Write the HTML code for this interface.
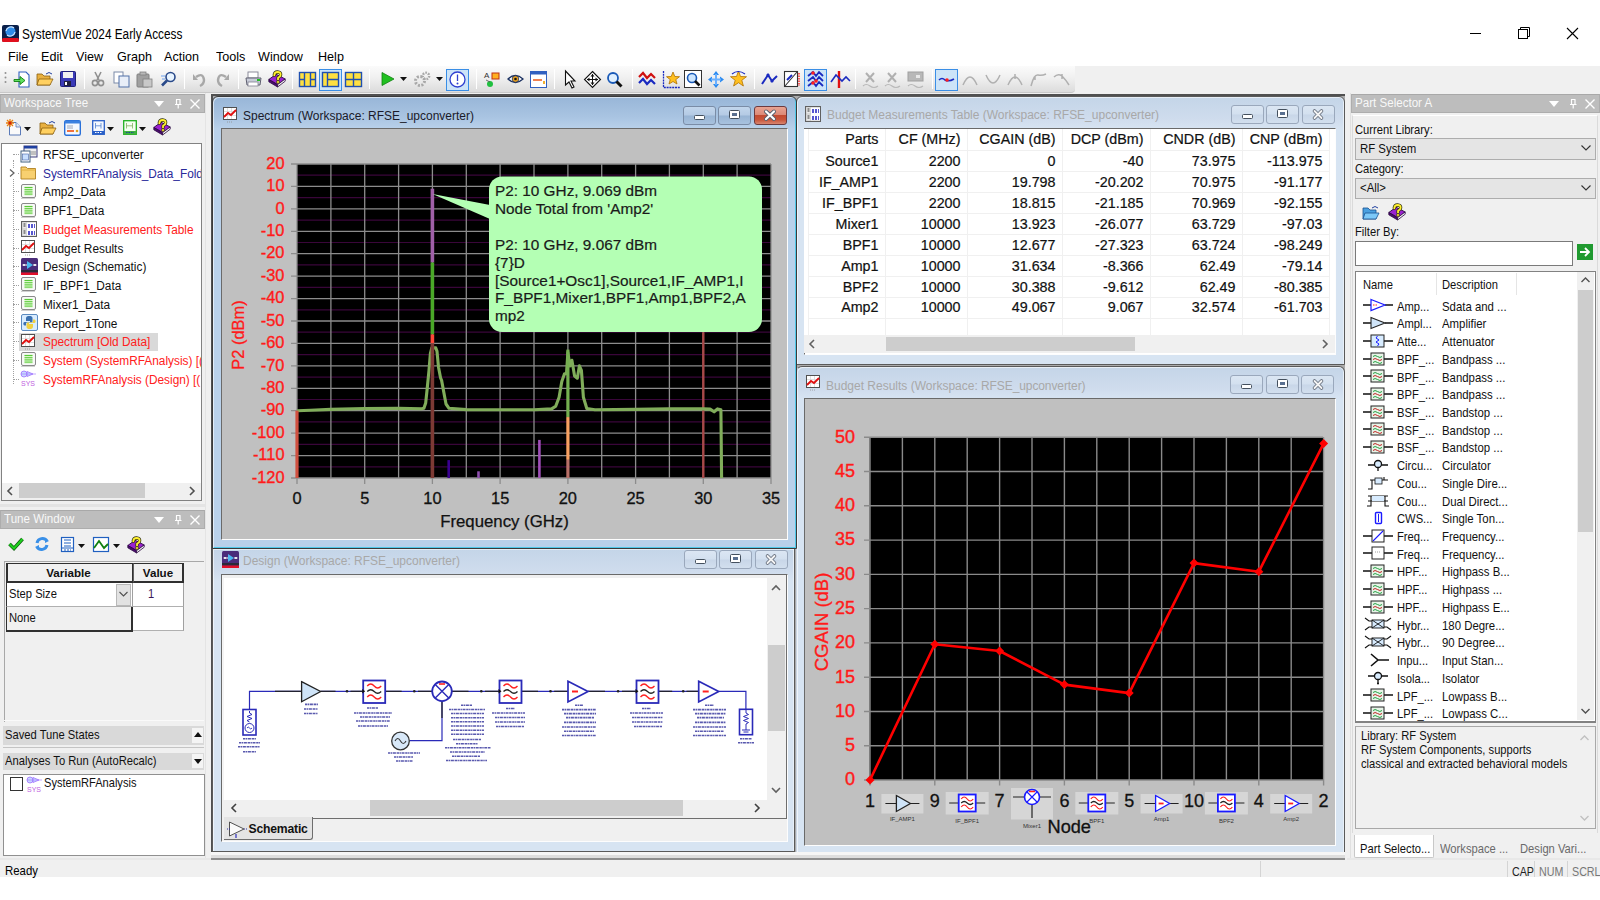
<!DOCTYPE html><html><head><meta charset="utf-8"><title>SystemVue</title><style>
html,body{margin:0;padding:0;width:1600px;height:900px;overflow:hidden;background:#fff;font-family:"Liberation Sans", sans-serif;position:relative;}
div{box-sizing:border-box;}
svg{position:absolute;overflow:visible;}
</style></head><body>
<svg style="left:2px;top:25px" width="17" height="17" viewBox="0 0 17 17"><rect x="0" y="0" width="17" height="17" rx="2" fill="#0a1f4a"/><rect x="0" y="13" width="17" height="4" rx="1.5" fill="#e0101e"/><circle cx="8.5" cy="6.5" r="5" fill="#2f8ce8"/><path d="M4 6 A5 5 0 0 1 12 3" stroke="#cfe6ff" stroke-width="1.2" fill="none"/><path d="M13 7 A5 5 0 0 1 5 10" stroke="#cfe6ff" stroke-width="1.2" fill="none"/></svg>
<div style="position:absolute;left:22px;top:23.59px;font-size:13.97px;line-height:20.95px;color:#000;white-space:nowrap;transform:scaleX(0.845);transform-origin:0 0;">SystemVue 2024 Early Access</div>
<svg style="left:1460px;top:20px" width="130" height="26" viewBox="0 0 130 26"><line x1="10" y1="13.5" x2="21" y2="13.5" stroke="#000" stroke-width="1"/><rect x="58.5" y="9.5" width="9" height="9" fill="none" stroke="#000" stroke-width="1"/><path d="M60.5 9.5 V7.5 H69.5 V16.5 H67.5" fill="none" stroke="#000" stroke-width="1"/><path d="M107 8 L118 19 M118 8 L107 19" stroke="#000" stroke-width="1.1"/></svg>
<div style="position:absolute;left:7.5px;top:47.52px;font-size:12.29px;line-height:18.44px;color:#000;white-space:nowrap;transform:scaleX(1.025);transform-origin:0 0;">File</div>
<div style="position:absolute;left:40.5px;top:47.52px;font-size:12.29px;line-height:18.44px;color:#000;white-space:nowrap;transform:scaleX(1.025);transform-origin:0 0;">Edit</div>
<div style="position:absolute;left:76px;top:47.52px;font-size:12.29px;line-height:18.44px;color:#000;white-space:nowrap;transform:scaleX(1.025);transform-origin:0 0;">View</div>
<div style="position:absolute;left:117px;top:47.52px;font-size:12.29px;line-height:18.44px;color:#000;white-space:nowrap;transform:scaleX(1.025);transform-origin:0 0;">Graph</div>
<div style="position:absolute;left:164px;top:47.52px;font-size:12.29px;line-height:18.44px;color:#000;white-space:nowrap;transform:scaleX(1.025);transform-origin:0 0;">Action</div>
<div style="position:absolute;left:216px;top:47.52px;font-size:12.29px;line-height:18.44px;color:#000;white-space:nowrap;transform:scaleX(1.025);transform-origin:0 0;">Tools</div>
<div style="position:absolute;left:258px;top:47.52px;font-size:12.29px;line-height:18.44px;color:#000;white-space:nowrap;transform:scaleX(1.025);transform-origin:0 0;">Window</div>
<div style="position:absolute;left:318px;top:47.52px;font-size:12.29px;line-height:18.44px;color:#000;white-space:nowrap;transform:scaleX(1.025);transform-origin:0 0;">Help</div>
<div style="position:absolute;left:0px;top:66px;width:1600px;height:28px;background:#f0f0f0;"></div>
<div style="position:absolute;left:0px;top:66px;width:1075px;height:27px;background:linear-gradient(#fbfbfb,#f0f0f0 45%,#dcdcdc);border-radius:0 0 4px 0;border-bottom:1px solid #c8c8c8;"></div>
<svg style="left:4px;top:71px" width="4" height="16" viewBox="0 0 4 16"><circle cx="1.5" cy="2" r="1" fill="#909090"/><circle cx="1.5" cy="6.5" r="1" fill="#909090"/><circle cx="1.5" cy="11" r="1" fill="#909090"/></svg><svg style="left:13px;top:71px" width="17" height="17" viewBox="0 0 17 17"><path d="M6 1 H13 L16 4 V16 H6 Z" fill="#fff" stroke="#3060c0" stroke-width="1.1"/><path d="M1 8.5 H7 V5.5 L12 9.5 L7 13.5 V10.5 H1 Z" fill="#60e060" stroke="#108010" stroke-width="0.9"/></svg><svg style="left:36px;top:71px" width="18" height="16" viewBox="0 0 18 16"><path d="M1 3 H6 L8 5 H14 V14 H1 Z" fill="#e8b040" stroke="#8a6010" stroke-width="0.8"/><path d="M3 8 H17 L14 14 H1 Z" fill="#ffd060" stroke="#8a6010" stroke-width="0.8"/><path d="M10 3 Q13 0 16 3" fill="none" stroke="#2040a0" stroke-width="1"/></svg><svg style="left:60px;top:71px" width="16" height="16" viewBox="0 0 16 16"><rect x="0.5" y="0.5" width="15" height="15" rx="1" fill="#3a3ab8" stroke="#20207a" stroke-width="1"/><rect x="3" y="1" width="10" height="6" fill="#f0f0f0"/><rect x="4" y="10" width="7" height="5" fill="#202040"/><rect x="5" y="11" width="2" height="3" fill="#fff"/></svg><div style="position:absolute;left:84px;top:69px;width:1px;height:20px;background:#c8c8c8;border-right:1px solid #fff;"></div><svg style="left:91px;top:71px" width="14" height="16" viewBox="0 0 14 16"><path d="M4 1 L8 9 M10 1 L6 9" stroke="#909090" stroke-width="1.6"/><circle cx="4" cy="12" r="2.6" fill="none" stroke="#909090" stroke-width="1.6"/><circle cx="10" cy="12" r="2.6" fill="none" stroke="#909090" stroke-width="1.6"/></svg><svg style="left:113px;top:71px" width="17" height="17" viewBox="0 0 17 17"><rect x="1" y="1" width="9" height="11" fill="#fff" stroke="#7a8aa8" stroke-width="1"/><rect x="6" y="5" width="10" height="11" fill="#e8eef8" stroke="#5070a8" stroke-width="1"/></svg><svg style="left:136px;top:71px" width="17" height="17" viewBox="0 0 17 17"><rect x="1" y="3" width="12" height="13" rx="1" fill="#a0a0a0" stroke="#808080" stroke-width="1"/><rect x="4" y="1" width="6" height="3" fill="#b8b8b8" stroke="#808080" stroke-width="0.8"/><rect x="7" y="8" width="9" height="8" fill="#c8c8c8" stroke="#808080" stroke-width="0.8"/></svg><svg style="left:160px;top:71px" width="17" height="17" viewBox="0 0 17 17"><circle cx="10.5" cy="6" r="4.5" fill="#e8f4ff" stroke="#2a4a8a" stroke-width="1.6"/><path d="M7 9.5 L2 14.5" stroke="#2a4a8a" stroke-width="2.6"/><path d="M1 5 H5 M2 8 H5" stroke="#6aa0f0" stroke-width="1"/></svg><div style="position:absolute;left:184px;top:69px;width:1px;height:20px;background:#c8c8c8;border-right:1px solid #fff;"></div><svg style="left:192px;top:71px" width="15" height="16" viewBox="0 0 15 16"><path d="M4 6 Q11 1 12 9 Q12 13 8 15" fill="none" stroke="#a8a8a8" stroke-width="2.4"/><path d="M1 3 L6 9 L1 9 Z" fill="#a8a8a8"/></svg><svg style="left:215px;top:71px" width="15" height="16" viewBox="0 0 15 16"><path d="M11 6 Q4 1 3 9 Q3 13 7 15" fill="none" stroke="#a8a8a8" stroke-width="2.4"/><path d="M14 3 L9 9 L14 9 Z" fill="#a8a8a8"/></svg><div style="position:absolute;left:238px;top:69px;width:1px;height:20px;background:#c8c8c8;border-right:1px solid #fff;"></div><svg style="left:245px;top:71px" width="17" height="17" viewBox="0 0 17 17"><rect x="3" y="1" width="10" height="6" fill="#fff" stroke="#808090" stroke-width="0.9"/><path d="M1 7 H16 L15 14 H2 Z" fill="#c8ccd8" stroke="#606070" stroke-width="1"/><rect x="3" y="11" width="10" height="4" fill="#fff" stroke="#808090" stroke-width="0.8"/><rect x="12" y="8" width="3" height="2" fill="#20c020"/></svg><svg style="left:268px;top:71px" width="18" height="17" viewBox="0 0 18 17"><g transform="scale(1.0)"><path d="M0.8 8.5 L8 3.2 L17.2 8 L9.6 13.6 Z" fill="#9a22d0" stroke="#2a0840" stroke-width="0.9"/><path d="M0.8 8.5 L0.8 10.8 L9.6 16 L9.6 13.6 Z" fill="#4a0a70" stroke="#2a0840" stroke-width="0.8"/><path d="M9.6 13.6 L17.2 8 L17.2 10.2 L9.6 16 Z" fill="#f4f4f4" stroke="#2a0840" stroke-width="0.8"/><path d="M6.3 4.2 Q6.5 1 9.6 1 Q12.8 1.2 12.6 3.8 Q12.4 5.6 10.2 6.6 L10 8.4" fill="none" stroke="#303010" stroke-width="3.4" stroke-linecap="round"/><path d="M6.3 4.2 Q6.5 1 9.6 1 Q12.8 1.2 12.6 3.8 Q12.4 5.6 10.2 6.6 L10 8.4" fill="none" stroke="#fff030" stroke-width="1.9" stroke-linecap="round"/><circle cx="10" cy="11" r="1.5" fill="#fff030" stroke="#303010" stroke-width="0.7"/></g></svg><div style="position:absolute;left:292px;top:69px;width:1px;height:20px;background:#c8c8c8;border-right:1px solid #fff;"></div><svg style="left:299px;top:71px" width="17" height="17" viewBox="0 0 17 17"><rect x="0.5" y="1.5" width="16" height="14" fill="#ffe040" stroke="#2050b0" stroke-width="1.4"/><path d="M5.5 1.5 V15.5 M11.5 1.5 V15.5 M0.5 8.5 H5.5 M11.5 8.5 H16.5" stroke="#2050b0" stroke-width="1.4"/></svg><div style="position:absolute;left:319px;top:68.5px;width:23px;height:22px;background:#cce4f8;border:1.5px solid #3a8ee6;"></div><svg style="left:322px;top:71px" width="17" height="17" viewBox="0 0 17 17"><rect x="0.5" y="1.5" width="16" height="14" fill="#ffe040" stroke="#2050b0" stroke-width="1.4"/><path d="M5.5 1.5 V15.5 M5.5 8.5 H16.5" stroke="#2050b0" stroke-width="1.4"/></svg><svg style="left:345px;top:71px" width="17" height="17" viewBox="0 0 17 17"><rect x="0.5" y="1.5" width="16" height="14" fill="#ffe040" stroke="#2050b0" stroke-width="1.4"/><path d="M8.5 1.5 V15.5 M0.5 8.5 H16.5" stroke="#2050b0" stroke-width="1.4"/></svg><div style="position:absolute;left:369px;top:69px;width:1px;height:20px;background:#c8c8c8;border-right:1px solid #fff;"></div><svg style="left:380px;top:71px" width="15" height="16" viewBox="0 0 15 16"><path d="M2 1.5 L14 8 L2 14.5 Z" fill="#20c020" stroke="#108010" stroke-width="0.8"/></svg><svg style="left:400px;top:77px" width="8" height="5" viewBox="0 0 8 5"><path d="M0 0 H7 L3.5 4 Z" fill="#111"/></svg><svg style="left:413px;top:71px" width="18" height="17" viewBox="0 0 18 17"><circle cx="7" cy="10" r="4.5" fill="none" stroke="#a8a8a8" stroke-width="3" stroke-dasharray="2 1.5"/><circle cx="13" cy="5" r="3.2" fill="none" stroke="#a8a8a8" stroke-width="2.4" stroke-dasharray="1.6 1.2"/></svg><svg style="left:436px;top:77px" width="8" height="5" viewBox="0 0 8 5"><path d="M0 0 H7 L3.5 4 Z" fill="#111"/></svg><div style="position:absolute;left:446px;top:68.5px;width:23px;height:22px;background:#cce4f8;border:1.5px solid #3a8ee6;"></div><svg style="left:448px;top:70px" width="19" height="19" viewBox="0 0 19 19"><circle cx="9.5" cy="9.5" r="7.5" fill="#fff" stroke="#3040d0" stroke-width="1.3"/><path d="M9.5 4.5 V11" stroke="#3040d0" stroke-width="1.3"/><circle cx="9.5" cy="13.5" r="1" fill="#3040d0"/></svg><div style="position:absolute;left:476px;top:69px;width:1px;height:20px;background:#c8c8c8;border-right:1px solid #fff;"></div><svg style="left:483px;top:70px" width="19" height="19" viewBox="0 0 19 19"><text x="1" y="8" font-size="8" font-family="Liberation Sans" fill="#333">A</text><rect x="9" y="3" width="7" height="6" fill="#ffb020" stroke="#c03010" stroke-width="1"/><circle cx="7" cy="14" r="3" fill="#20c040"/><path d="M3 10 L7 12" stroke="#505050" stroke-width="0.8"/></svg><svg style="left:507px;top:72px" width="17" height="14" viewBox="0 0 17 14"><path d="M1 7 Q8.5 0 16 7 Q8.5 14 1 7 Z" fill="#fff" stroke="#1a3060" stroke-width="1.3"/><circle cx="8.5" cy="7" r="3.3" fill="#e8a020" stroke="#1a3060" stroke-width="0.8"/><circle cx="8.5" cy="7" r="1.3" fill="#111"/></svg><svg style="left:530px;top:71px" width="17" height="17" viewBox="0 0 17 17"><rect x="0.5" y="0.5" width="16" height="16" fill="#fff" stroke="#3060c0" stroke-width="1"/><rect x="0.5" y="0.5" width="16" height="3" fill="#3060c0"/><rect x="3" y="8" width="9" height="2" fill="#f08050"/><rect x="13" y="10" width="2" height="3" fill="#f0b030"/></svg><div style="position:absolute;left:554px;top:69px;width:1px;height:20px;background:#c8c8c8;border-right:1px solid #fff;"></div><svg style="left:564px;top:70px" width="12" height="19" viewBox="0 0 12 19"><path d="M1.5 1 V15 L5 12 L8 18 L10 17 L7 11 L11 11 Z" fill="#fff" stroke="#111" stroke-width="1.1"/></svg><svg style="left:584px;top:71px" width="17" height="17" viewBox="0 0 17 17"><path d="M8.5 0.5 L16.5 8.5 L8.5 16.5 L0.5 8.5 Z" fill="#fff" stroke="#111" stroke-width="1.1"/><path d="M8.5 3 V14 M3 8.5 H14" stroke="#111" stroke-width="1"/><path d="M8.5 3 L6.5 5.5 H10.5 Z M8.5 14 L6.5 11.5 H10.5 Z M3 8.5 L5.5 6.5 V10.5 Z M14 8.5 L11.5 6.5 V10.5 Z" fill="#111"/></svg><svg style="left:606px;top:71px" width="17" height="17" viewBox="0 0 17 17"><circle cx="7" cy="7" r="5" fill="#e0f0ff" stroke="#1a5ab8" stroke-width="1.8"/><path d="M10.5 10.5 L15.5 15.5" stroke="#111" stroke-width="3"/></svg><div style="position:absolute;left:632px;top:69px;width:1px;height:20px;background:#c8c8c8;border-right:1px solid #fff;"></div><svg style="left:638px;top:71px" width="18" height="17" viewBox="0 0 18 17"><path d="M1 6 L5 2 L9 7 L13 3 L17 7" fill="none" stroke="#d01010" stroke-width="2.2"/><path d="M1 12 L5 8 L9 13 L13 9 L17 13" fill="none" stroke="#1a2ac0" stroke-width="2.2"/></svg><svg style="left:662px;top:70px" width="19" height="19" viewBox="0 0 19 19"><path d="M1.5 1 V17.5 H18" stroke="#1a2ac0" stroke-width="1.3" fill="none" stroke-dasharray="2 0.8"/><path d="M11 2 L12.8 6.5 L17.5 6.7 L13.8 9.6 L15 14 L11 11.5 L7 14 L8.2 9.6 L4.5 6.7 L9.2 6.5 Z" fill="#ffc020" stroke="#b07000" stroke-width="0.8"/></svg><svg style="left:684px;top:70px" width="18" height="19" viewBox="0 0 18 19"><rect x="0.5" y="0.5" width="17" height="17" fill="#fff" stroke="#333" stroke-width="1"/><circle cx="8" cy="8" r="4.5" fill="#cde6ff" stroke="#1a5ab8" stroke-width="1.6"/><path d="M11 11 L15.5 15.5" stroke="#111" stroke-width="2.6"/></svg><svg style="left:707px;top:70px" width="18" height="19" viewBox="0 0 18 19"><path d="M9 1 L12 5 H6 Z M9 18 L12 14 H6 Z M1 9.5 L5 6.5 V12.5 Z M17 9.5 L13 6.5 V12.5 Z" fill="#2a8af0"/><path d="M9 4 V15 M4 9.5 H14" stroke="#6ab0ff" stroke-width="2"/></svg><svg style="left:729px;top:70px" width="19" height="19" viewBox="0 0 19 19"><path d="M9.5 1 L11.5 6.5 L17.5 6.7 L12.8 10.3 L14.4 16 L9.5 12.7 L4.6 16 L6.2 10.3 L1.5 6.7 L7.5 6.5 Z" fill="#ffc020" stroke="#b07000" stroke-width="0.8"/><path d="M3 4 Q9 -1 16 4" fill="none" stroke="#1a2ac0" stroke-width="1.2"/></svg><div style="position:absolute;left:754px;top:69px;width:1px;height:20px;background:#c8c8c8;border-right:1px solid #fff;"></div><svg style="left:761px;top:71px" width="17" height="16" viewBox="0 0 17 16"><path d="M1 13 L7 4 L11 10 L16 5" fill="none" stroke="#1a2ac0" stroke-width="2"/><circle cx="7" cy="4" r="1.6" fill="#1a2ac0"/><circle cx="11" cy="10" r="1.6" fill="#1a2ac0"/></svg><svg style="left:784px;top:71px" width="17" height="17" viewBox="0 0 17 17"><rect x="0.5" y="0.5" width="13" height="15" fill="#fff" stroke="#333" stroke-width="1.1"/><path d="M1 15 L13 1" stroke="#333" stroke-width="1.1"/><path d="M3 9 L8 4" stroke="#1a2ac0" stroke-width="2"/><path d="M15 2 V15" stroke="#ff2020" stroke-width="1.4" stroke-dasharray="1.5 1"/></svg><div style="position:absolute;left:804px;top:68.5px;width:23px;height:22px;background:#cce4f8;border:1.5px solid #3a8ee6;"></div><svg style="left:806px;top:70px" width="19" height="19" viewBox="0 0 19 19"><path d="M2 6 L7 2 L10 6 L13 2 L17 6" fill="none" stroke="#1a2ac0" stroke-width="1.8"/><path d="M2 11 L7 7 L10 11 L13 7 L17 11" fill="none" stroke="#1a2ac0" stroke-width="1.8"/><path d="M2 16 L7 12 L10 16 L13 12 L17 16" fill="none" stroke="#1a2ac0" stroke-width="1.8"/><circle cx="7" cy="3" r="1.8" fill="#ff2020"/><circle cx="10" cy="11" r="1.8" fill="#ff2020"/><circle cx="7" cy="13" r="1.8" fill="#ff2020"/></svg><svg style="left:830px;top:70px" width="22" height="19" viewBox="0 0 22 19"><path d="M9 1 V18" stroke="#e01010" stroke-width="2.4"/><path d="M1 12 L6 5 L12 11 L16 7 L20 11" fill="none" stroke="#1a2ac0" stroke-width="1.6"/></svg><div style="position:absolute;left:855px;top:69px;width:1px;height:20px;background:#c8c8c8;border-right:1px solid #fff;"></div><svg style="left:862px;top:71px" width="17" height="17" viewBox="0 0 17 17"><path d="M4 2 L12 11 M12 2 L4 11" stroke="#b0b0b0" stroke-width="2"/><path d="M1 15 Q4 12 8 15 T16 15" fill="none" stroke="#b8b8b8" stroke-width="1.2"/></svg><svg style="left:884px;top:71px" width="17" height="17" viewBox="0 0 17 17"><path d="M4 2 L12 11 M12 2 L4 11" stroke="#b0b0b0" stroke-width="2"/><path d="M1 15 Q4 12 8 15 T16 15" fill="none" stroke="#b8b8b8" stroke-width="1.2"/></svg><svg style="left:907px;top:71px" width="17" height="17" viewBox="0 0 17 17"><rect x="1" y="1" width="15" height="9" fill="#b8b8b8" stroke="#a0a0a0" stroke-width="1"/><rect x="9" y="4" width="4" height="3" fill="#e8e8e8"/><path d="M1 15 Q4 12 8 15 T16 15" fill="none" stroke="#b8b8b8" stroke-width="1.2"/></svg><div style="position:absolute;left:932px;top:69px;width:1px;height:20px;background:#c8c8c8;border-right:1px solid #fff;"></div><div style="position:absolute;left:935px;top:68.5px;width:23px;height:22px;background:#cce4f8;border:1.5px solid #3a8ee6;"></div><svg style="left:937px;top:70px" width="19" height="19" viewBox="0 0 19 19"><path d="M2 10 Q5 7 8 10 Q12 12 17 9" fill="none" stroke="#1a2ac0" stroke-width="1.6"/><circle cx="10" cy="10" r="1.8" fill="#ff2020"/></svg><svg style="left:962px;top:71px" width="17" height="17" viewBox="0 0 17 17"><path d="M1 14 Q8 -2 15 14" fill="none" stroke="#b0b0b0" stroke-width="1.5"/></svg><svg style="left:985px;top:71px" width="17" height="17" viewBox="0 0 17 17"><path d="M1 4 Q8 20 15 4" fill="none" stroke="#b0b0b0" stroke-width="1.5"/></svg><svg style="left:1007px;top:71px" width="17" height="17" viewBox="0 0 17 17"><path d="M1 14 Q8 -2 15 14 M8 3 V8" fill="none" stroke="#b0b0b0" stroke-width="1.5"/></svg><svg style="left:1030px;top:71px" width="17" height="17" viewBox="0 0 17 17"><path d="M1 15 Q4 3 8 4 Q12 5 16 3 M5 6 V9" fill="none" stroke="#b0b0b0" stroke-width="1.5"/></svg><svg style="left:1053px;top:71px" width="17" height="17" viewBox="0 0 17 17"><path d="M1 6 Q5 2 9 5 Q13 9 16 14 M9 3 V8" fill="none" stroke="#b0b0b0" stroke-width="1.5"/></svg>
<div style="position:absolute;left:0px;top:93px;width:211px;height:767px;background:#f0f0f0;"></div>
<div style="position:absolute;left:205px;top:93px;width:6px;height:767px;background:#f0f0f0;border-left:1px solid #e4e4e4;"></div><div style="position:absolute;left:0px;top:93.5px;width:205px;height:19px;background:#bdbdbd;border:1px solid #adadad;border-top-color:#a8a8a8;"></div><div style="position:absolute;left:4px;top:94.98px;font-size:11.87px;line-height:17.81px;color:#f8f8f8;white-space:nowrap;transform:scaleX(0.977);transform-origin:0 0;">Workspace Tree</div><svg style="left:153px;top:99.5px" width="12" height="8" viewBox="0 0 12 8"><path d="M1 1 H11 L6 7 Z" fill="#fff"/></svg><svg style="left:172px;top:97.5px" width="12" height="12" viewBox="0 0 12 12"><path d="M4 1.5 H8.5 M4.5 1.5 V6.5 M8 1.5 V6.5 M3 6.5 H9.5 M6.2 6.5 V10.5" stroke="#fff" stroke-width="1.2" fill="none"/></svg><svg style="left:189px;top:97.5px" width="12" height="12" viewBox="0 0 12 12"><path d="M1.5 1.5 L10.5 10.5 M10.5 1.5 L1.5 10.5" stroke="#fff" stroke-width="1.4"/></svg><svg style="left:6px;top:119px" width="16" height="17" viewBox="0 0 16 17"><path d="M3.5 3.5 H10 L14.5 8 V16 H3.5 Z" fill="#fafafa" stroke="#5a7ab8" stroke-width="1"/><path d="M10 3.5 V8 H14.5" fill="#e0e8f4" stroke="#5a7ab8" stroke-width="0.8"/><path d="M1 1 L7 7 M7 1 L1 7 M4 0 V8 M0 4 H8" stroke="#e88010" stroke-width="1.3"/><circle cx="4" cy="4" r="1.5" fill="#d02010"/></svg><svg style="left:24px;top:127px" width="8" height="5" viewBox="0 0 8 5"><path d="M0 0 H7 L3.5 4 Z" fill="#111"/></svg><svg style="left:39px;top:120px" width="18" height="16" viewBox="0 0 18 16"><path d="M1 3 H6 L8 5 H14 V14 H1 Z" fill="#e8b040" stroke="#8a6010" stroke-width="0.8"/><path d="M3 8 H17 L14 14 H1 Z" fill="#ffd060" stroke="#8a6010" stroke-width="0.8"/><path d="M10 3 Q13 0 16 3" fill="none" stroke="#2040a0" stroke-width="1"/></svg><svg style="left:64px;top:120px" width="17" height="16" viewBox="0 0 17 16"><rect x="0.7" y="0.7" width="15.6" height="14.6" rx="1.5" fill="#f4f8ff" stroke="#2a70d8" stroke-width="1.4"/><rect x="0.7" y="0.7" width="15.6" height="2.8" fill="#3a80e0"/><path d="M3 6 H9 M3 8 H9" stroke="#a0a8b8" stroke-width="1"/><rect x="3" y="10" width="7" height="2" fill="#f07040"/><circle cx="13" cy="11" r="1.3" fill="#e0a020"/></svg><svg style="left:92px;top:120px" width="13" height="15" viewBox="0 0 13 15"><rect x="0.7" y="0.7" width="11.6" height="13.6" fill="#f4f8ff" stroke="#2a60c8" stroke-width="1.3"/><path d="M3.5 3 V8.5 M9 3 V8.5 M3.5 5.8 H9" stroke="#5080d0" stroke-width="0.8"/><rect x="0.7" y="11" width="11.6" height="3.3" fill="#2a60c8"/><path d="M3 12.5 H10" stroke="#fff" stroke-width="1" stroke-dasharray="1.5 1"/></svg><svg style="left:107px;top:127px" width="8" height="5" viewBox="0 0 8 5"><path d="M0 0 H7 L3.5 4 Z" fill="#111"/></svg><svg style="left:123px;top:120px" width="14" height="15" viewBox="0 0 14 15"><rect x="0.7" y="0.7" width="12.6" height="13.6" fill="#f4fff0" stroke="#20b020" stroke-width="1.3"/><path d="M3.5 3 V8.5 M9.5 3 V8.5 M3.5 5.8 H9.5" stroke="#80b060" stroke-width="0.8"/><rect x="0.7" y="11" width="12.6" height="3.3" fill="#40b040"/><path d="M3 12.5 H11" stroke="#1a4a9a" stroke-width="1" stroke-dasharray="1.5 1"/></svg><svg style="left:139px;top:127px" width="8" height="5" viewBox="0 0 8 5"><path d="M0 0 H7 L3.5 4 Z" fill="#111"/></svg><svg style="left:153px;top:119px" width="18" height="17" viewBox="0 0 18 17"><g transform="scale(1.0)"><path d="M0.8 8.5 L8 3.2 L17.2 8 L9.6 13.6 Z" fill="#9a22d0" stroke="#2a0840" stroke-width="0.9"/><path d="M0.8 8.5 L0.8 10.8 L9.6 16 L9.6 13.6 Z" fill="#4a0a70" stroke="#2a0840" stroke-width="0.8"/><path d="M9.6 13.6 L17.2 8 L17.2 10.2 L9.6 16 Z" fill="#f4f4f4" stroke="#2a0840" stroke-width="0.8"/><path d="M6.3 4.2 Q6.5 1 9.6 1 Q12.8 1.2 12.6 3.8 Q12.4 5.6 10.2 6.6 L10 8.4" fill="none" stroke="#303010" stroke-width="3.4" stroke-linecap="round"/><path d="M6.3 4.2 Q6.5 1 9.6 1 Q12.8 1.2 12.6 3.8 Q12.4 5.6 10.2 6.6 L10 8.4" fill="none" stroke="#fff030" stroke-width="1.9" stroke-linecap="round"/><circle cx="10" cy="11" r="1.5" fill="#fff030" stroke="#303010" stroke-width="0.7"/></g></svg><div style="position:absolute;left:1px;top:143px;width:201px;height:358px;background:#fff;border:1px solid #828282;"></div><svg style="left:0px;top:0px" width="30" height="400" viewBox="0 0 30 400"></svg><div style="position:absolute;left:12.5px;top:160px;width:1px;height:224px;border-left:1px dotted #a0a0a0;"></div><div style="position:absolute;left:13px;top:153.8px;width:6px;height:1px;border-top:1px dotted #a0a0a0;"></div><svg style="left:20px;top:145.3px" width="18" height="18" viewBox="0 0 18 18"><rect x="4" y="1" width="13" height="11" fill="#f0f0f0" stroke="#404080" stroke-width="1"/><rect x="4" y="1" width="13" height="2.5" fill="#2040a0"/><rect x="1" y="6" width="9" height="11" fill="#fff" stroke="#406080" stroke-width="1"/><rect x="2.5" y="9" width="6" height="6" fill="#c8e0ff" stroke="#4060a0" stroke-width="0.6"/><rect x="11" y="6" width="5" height="4" fill="#c0c0c0"/></svg><div style="position:absolute;left:42.5px;top:145.93px;font-size:12.01px;line-height:18.02px;color:#111;white-space:nowrap;transform:scaleX(0.987);transform-origin:0 0;width:160.1px;overflow:hidden;">RFSE_upconverter</div><div style="position:absolute;left:13px;top:172.54000000000002px;width:6px;height:1px;border-top:1px dotted #a0a0a0;"></div><svg style="left:20px;top:165.04000000000002px" width="17" height="15" viewBox="0 0 17 15"><path d="M1 2 H6 L7.5 3.5 H15.5 V14 H1 Z" fill="#f8d070" stroke="#b08020" stroke-width="0.9"/><path d="M1 5 H15.5" stroke="#e0b040" stroke-width="1"/></svg><div style="position:absolute;left:42.5px;top:164.67px;font-size:12.01px;line-height:18.02px;color:#2a2a9a;white-space:nowrap;transform:scaleX(0.987);transform-origin:0 0;width:160.1px;overflow:hidden;">SystemRFAnalysis_Data_Fold</div><div style="position:absolute;left:13px;top:191.28px;width:6px;height:1px;border-top:1px dotted #a0a0a0;"></div><svg style="left:20px;top:182.78px" width="17" height="17" viewBox="0 0 17 17"><rect x="1.5" y="1.5" width="14" height="13" rx="1.5" fill="#f8f8f8" stroke="#8a8a8a" stroke-width="1"/><rect x="4.5" y="3.5" width="8" height="9" fill="#d8f8c8"/><path d="M4.5 4.5 H12.5 M4.5 6.7 H12.5 M4.5 8.9 H12.5 M4.5 11.1 H12.5" stroke="#58c838" stroke-width="1"/><path d="M1.5 15.5 H15.5" stroke="#a0a0a0" stroke-width="1" stroke-dasharray="1 1"/></svg><div style="position:absolute;left:42.5px;top:183.41px;font-size:12.01px;line-height:18.02px;color:#111;white-space:nowrap;transform:scaleX(0.987);transform-origin:0 0;width:160.1px;overflow:hidden;">Amp2_Data</div><div style="position:absolute;left:13px;top:210.02px;width:6px;height:1px;border-top:1px dotted #a0a0a0;"></div><svg style="left:20px;top:201.52px" width="17" height="17" viewBox="0 0 17 17"><rect x="1.5" y="1.5" width="14" height="13" rx="1.5" fill="#f8f8f8" stroke="#8a8a8a" stroke-width="1"/><rect x="4.5" y="3.5" width="8" height="9" fill="#d8f8c8"/><path d="M4.5 4.5 H12.5 M4.5 6.7 H12.5 M4.5 8.9 H12.5 M4.5 11.1 H12.5" stroke="#58c838" stroke-width="1"/><path d="M1.5 15.5 H15.5" stroke="#a0a0a0" stroke-width="1" stroke-dasharray="1 1"/></svg><div style="position:absolute;left:42.5px;top:202.15px;font-size:12.01px;line-height:18.02px;color:#111;white-space:nowrap;transform:scaleX(0.987);transform-origin:0 0;width:160.1px;overflow:hidden;">BPF1_Data</div><div style="position:absolute;left:13px;top:228.76px;width:6px;height:1px;border-top:1px dotted #a0a0a0;"></div><svg style="left:20.5px;top:220.76px" width="16" height="16" viewBox="0 0 16 16"><rect x="0.5" y="0.5" width="15" height="15" fill="#c8c8c8" stroke="#606060"/><rect x="6" y="1.5" width="9" height="13" fill="#fff"/><rect x="1.5" y="1.5" width="4" height="6" fill="#e8e8e8"/><rect x="1.5" y="8.5" width="4" height="6" fill="#e8e8e8"/><path d="M7 4 H14 M7 6 H14 M7 11 H14 M7 13 H14" stroke="#2020c0" stroke-width="1.3" stroke-dasharray="2 1"/><path d="M2.5 3 H4.5 M2.5 5 H4.5 M2.5 10 H4.5 M2.5 12 H4.5" stroke="#303030" stroke-width="1"/></svg><div style="position:absolute;left:42.5px;top:220.89px;font-size:12.01px;line-height:18.02px;color:#ff2020;white-space:nowrap;transform:scaleX(0.987);transform-origin:0 0;width:160.1px;overflow:hidden;">Budget Measurements Table</div><div style="position:absolute;left:13px;top:247.5px;width:6px;height:1px;border-top:1px dotted #a0a0a0;"></div><svg style="left:20px;top:239.0px" width="17" height="17" viewBox="0 0 17 17"><rect x="1.5" y="1.5" width="13" height="12" fill="#fff" stroke="#505050" stroke-width="1"/><path d="M5.5 2 V13 M9.5 2 V13 M2 5.5 H14 M2 9.5 H14" stroke="#d8d8d8" stroke-width="0.8"/><path d="M2 11 L6 7 L9 9 L14 4" stroke="#e01010" stroke-width="1.8" fill="none"/><path d="M5 16 H11" stroke="#909090" stroke-width="0.8" stroke-dasharray="1 1"/></svg><div style="position:absolute;left:42.5px;top:239.63px;font-size:12.01px;line-height:18.02px;color:#111;white-space:nowrap;transform:scaleX(0.987);transform-origin:0 0;width:160.1px;overflow:hidden;">Budget Results</div><div style="position:absolute;left:13px;top:266.24px;width:6px;height:1px;border-top:1px dotted #a0a0a0;"></div><svg style="left:20.5px;top:257.74px" width="17" height="17" viewBox="0 0 17 17"><rect x="0" y="0" width="17" height="17" rx="1.5" fill="#4a2c7a"/><rect x="0" y="12" width="17" height="2.5" fill="#2a2a3a"/><rect x="0" y="14.5" width="17" height="2.5" fill="#e0102a"/><path d="M6 3 L12 7 L6 11 Z" fill="#4ab8f0"/><path d="M1.5 7 H6 M12 7 H15.5" stroke="#fff" stroke-width="1.2"/><circle cx="3" cy="7" r="1" fill="#fff"/><circle cx="14" cy="7" r="1" fill="#fff"/></svg><div style="position:absolute;left:42.5px;top:258.37px;font-size:12.01px;line-height:18.02px;color:#111;white-space:nowrap;transform:scaleX(0.987);transform-origin:0 0;width:160.1px;overflow:hidden;">Design (Schematic)</div><div style="position:absolute;left:13px;top:284.98px;width:6px;height:1px;border-top:1px dotted #a0a0a0;"></div><svg style="left:20px;top:276.48px" width="17" height="17" viewBox="0 0 17 17"><rect x="1.5" y="1.5" width="14" height="13" rx="1.5" fill="#f8f8f8" stroke="#8a8a8a" stroke-width="1"/><rect x="4.5" y="3.5" width="8" height="9" fill="#d8f8c8"/><path d="M4.5 4.5 H12.5 M4.5 6.7 H12.5 M4.5 8.9 H12.5 M4.5 11.1 H12.5" stroke="#58c838" stroke-width="1"/><path d="M1.5 15.5 H15.5" stroke="#a0a0a0" stroke-width="1" stroke-dasharray="1 1"/></svg><div style="position:absolute;left:42.5px;top:277.11px;font-size:12.01px;line-height:18.02px;color:#111;white-space:nowrap;transform:scaleX(0.987);transform-origin:0 0;width:160.1px;overflow:hidden;">IF_BPF1_Data</div><div style="position:absolute;left:13px;top:303.72px;width:6px;height:1px;border-top:1px dotted #a0a0a0;"></div><svg style="left:20px;top:295.22px" width="17" height="17" viewBox="0 0 17 17"><rect x="1.5" y="1.5" width="14" height="13" rx="1.5" fill="#f8f8f8" stroke="#8a8a8a" stroke-width="1"/><rect x="4.5" y="3.5" width="8" height="9" fill="#d8f8c8"/><path d="M4.5 4.5 H12.5 M4.5 6.7 H12.5 M4.5 8.9 H12.5 M4.5 11.1 H12.5" stroke="#58c838" stroke-width="1"/><path d="M1.5 15.5 H15.5" stroke="#a0a0a0" stroke-width="1" stroke-dasharray="1 1"/></svg><div style="position:absolute;left:42.5px;top:295.85px;font-size:12.01px;line-height:18.02px;color:#111;white-space:nowrap;transform:scaleX(0.987);transform-origin:0 0;width:160.1px;overflow:hidden;">Mixer1_Data</div><div style="position:absolute;left:13px;top:322.46000000000004px;width:6px;height:1px;border-top:1px dotted #a0a0a0;"></div><svg style="left:20.5px;top:313.96000000000004px" width="17" height="17" viewBox="0 0 17 17"><rect x="0.5" y="0.5" width="16" height="16" rx="1.5" fill="#d8ecff" stroke="#5a8ac0" stroke-width="1"/><path d="M8.5 2 C5 2 5 3.5 5 5 V7 H9 V8 H3.5 C2 8 2 11 3.5 11.5 H5 V9.5 C5 8.8 5.6 8.5 6.2 8.5 H10 C11 8.5 11.5 8 11.5 7 V4 C11.5 2.5 10 2 8.5 2 Z" fill="#3a70b0"/><path d="M8.5 15 C12 15 12 13.5 12 12 V10 H8 V9 H13.5 C15 9 15 6 13.5 5.5 H12 V7.5 C12 8.2 11.4 8.5 10.8 8.5 H7 C6 8.5 5.5 9 5.5 10 V13 C5.5 14.5 7 15 8.5 15 Z" fill="#f0d040"/></svg><div style="position:absolute;left:42.5px;top:314.59px;font-size:12.01px;line-height:18.02px;color:#111;white-space:nowrap;transform:scaleX(0.987);transform-origin:0 0;width:160.1px;overflow:hidden;">Report_1Tone</div><div style="position:absolute;left:13px;top:341.2px;width:6px;height:1px;border-top:1px dotted #a0a0a0;"></div><div style="position:absolute;left:19px;top:332.9px;width:139px;height:18.2px;background:#d9d9d9;"></div><svg style="left:20px;top:332.7px" width="17" height="17" viewBox="0 0 17 17"><rect x="1.5" y="1.5" width="13" height="12" fill="#fff" stroke="#505050" stroke-width="1"/><path d="M5.5 2 V13 M9.5 2 V13 M2 5.5 H14 M2 9.5 H14" stroke="#d8d8d8" stroke-width="0.8"/><path d="M2 11 L6 7 L9 9 L14 4" stroke="#e01010" stroke-width="1.8" fill="none"/><path d="M5 16 H11" stroke="#909090" stroke-width="0.8" stroke-dasharray="1 1"/></svg><div style="position:absolute;left:42.5px;top:333.33px;font-size:12.01px;line-height:18.02px;color:#ff2020;white-space:nowrap;transform:scaleX(0.987);transform-origin:0 0;width:160.1px;overflow:hidden;">Spectrum [Old Data]</div><div style="position:absolute;left:13px;top:359.94px;width:6px;height:1px;border-top:1px dotted #a0a0a0;"></div><svg style="left:20px;top:351.44px" width="17" height="17" viewBox="0 0 17 17"><rect x="1.5" y="1.5" width="14" height="13" rx="1.5" fill="#f8f8f8" stroke="#8a8a8a" stroke-width="1"/><rect x="4.5" y="3.5" width="8" height="9" fill="#d8f8c8"/><path d="M4.5 4.5 H12.5 M4.5 6.7 H12.5 M4.5 8.9 H12.5 M4.5 11.1 H12.5" stroke="#58c838" stroke-width="1"/><path d="M1.5 15.5 H15.5" stroke="#a0a0a0" stroke-width="1" stroke-dasharray="1 1"/></svg><div style="position:absolute;left:42.5px;top:352.07px;font-size:12.01px;line-height:18.02px;color:#ff2020;white-space:nowrap;transform:scaleX(0.987);transform-origin:0 0;width:160.1px;overflow:hidden;">System (SystemRFAnalysis) [(</div><div style="position:absolute;left:13px;top:378.68px;width:6px;height:1px;border-top:1px dotted #a0a0a0;"></div><svg style="left:20px;top:370.18px" width="17" height="17" viewBox="0 0 17 17"><circle cx="4" cy="4" r="3" fill="#c8d8ff" stroke="#a070ff" stroke-width="0.8"/><path d="M7 1.5 L13 4 L7 6.5 Z" fill="#c8e0ff" stroke="#a070ff" stroke-width="0.8"/><path d="M1 4 H16" stroke="#a070ff" stroke-width="0.6"/><text x="1" y="16" font-size="7" font-family="Liberation Sans" fill="#c060e0">SYS</text></svg><div style="position:absolute;left:42.5px;top:370.81px;font-size:12.01px;line-height:18.02px;color:#ff2020;white-space:nowrap;transform:scaleX(0.987);transform-origin:0 0;width:160.1px;overflow:hidden;">SystemRFAnalysis (Design) [(</div><div style="position:absolute;left:7px;top:168px;width:10px;height:10px;background:#fff;"></div><svg style="left:8px;top:168px" width="8" height="10" viewBox="0 0 8 10"><path d="M2 1.5 L6 5 L2 8.5" fill="none" stroke="#606060" stroke-width="1.2"/></svg><div style="position:absolute;left:2px;top:482.5px;width:199px;height:17px;background:#f0f0f0;"></div><div style="position:absolute;left:19px;top:483px;width:126px;height:15px;background:#cdcdcd;"></div><svg style="left:5px;top:485px" width="10" height="12" viewBox="0 0 10 12"><path d="M7 2 L3 6 L7 10" fill="none" stroke="#505050" stroke-width="1.6"/></svg><svg style="left:187px;top:485px" width="10" height="12" viewBox="0 0 10 12"><path d="M3 2 L7 6 L3 10" fill="none" stroke="#505050" stroke-width="1.6"/></svg><div style="position:absolute;left:0px;top:504px;width:205px;height:3px;background:#e4e4e4;"></div><div style="position:absolute;left:0px;top:510px;width:205px;height:19px;background:#bdbdbd;border:1px solid #adadad;border-top-color:#a8a8a8;"></div><div style="position:absolute;left:4px;top:511.48px;font-size:11.87px;line-height:17.81px;color:#f8f8f8;white-space:nowrap;transform:scaleX(0.977);transform-origin:0 0;">Tune Window</div><svg style="left:153px;top:516px" width="12" height="8" viewBox="0 0 12 8"><path d="M1 1 H11 L6 7 Z" fill="#fff"/></svg><svg style="left:172px;top:514px" width="12" height="12" viewBox="0 0 12 12"><path d="M4 1.5 H8.5 M4.5 1.5 V6.5 M8 1.5 V6.5 M3 6.5 H9.5 M6.2 6.5 V10.5" stroke="#fff" stroke-width="1.2" fill="none"/></svg><svg style="left:189px;top:514px" width="12" height="12" viewBox="0 0 12 12"><path d="M1.5 1.5 L10.5 10.5 M10.5 1.5 L1.5 10.5" stroke="#fff" stroke-width="1.4"/></svg><svg style="left:8px;top:537px" width="16" height="14" viewBox="0 0 16 14"><path d="M1.5 7 L6 11.5 L14.5 2" fill="none" stroke="#0a5a0a" stroke-width="3.6"/><path d="M1.5 7 L6 11.5 L14.5 2" fill="none" stroke="#20d020" stroke-width="2.2"/></svg><svg style="left:34px;top:536px" width="16" height="16" viewBox="0 0 16 16"><path d="M3 7 A5.5 5.5 0 0 1 13 5" fill="none" stroke="#3a90e8" stroke-width="3"/><path d="M13 9 A5.5 5.5 0 0 1 3 11" fill="none" stroke="#3a90e8" stroke-width="3"/><path d="M11 2 L15 5 L11 7 Z M5 9 L1 11 L5 14 Z" fill="#3a90e8"/></svg><svg style="left:61px;top:537px" width="13" height="15" viewBox="0 0 13 15"><rect x="0.5" y="0.5" width="12" height="14" fill="#fff" stroke="#2060c0" stroke-width="1.2"/><path d="M3 3 H10 M3 6 H10 M3 9 H10 M0.5 11 H12.5" stroke="#2060c0" stroke-width="1"/><path d="M3 13 H10" stroke="#2060c0" stroke-width="1" stroke-dasharray="2 1"/></svg><svg style="left:78px;top:544px" width="8" height="5" viewBox="0 0 8 5"><path d="M0 0 H7 L3.5 4 Z" fill="#111"/></svg><svg style="left:93px;top:537px" width="16" height="15" viewBox="0 0 16 15"><rect x="0.5" y="0.5" width="15" height="14" fill="#fff" stroke="#2060c0" stroke-width="1.2"/><path d="M1 11 L6 4 L11 11 L15 7" fill="none" stroke="#108010" stroke-width="1.8"/></svg><svg style="left:113px;top:544px" width="8" height="5" viewBox="0 0 8 5"><path d="M0 0 H7 L3.5 4 Z" fill="#111"/></svg><svg style="left:127px;top:537px" width="18" height="17" viewBox="0 0 18 17"><g transform="scale(1.0)"><path d="M0.8 8.5 L8 3.2 L17.2 8 L9.6 13.6 Z" fill="#9a22d0" stroke="#2a0840" stroke-width="0.9"/><path d="M0.8 8.5 L0.8 10.8 L9.6 16 L9.6 13.6 Z" fill="#4a0a70" stroke="#2a0840" stroke-width="0.8"/><path d="M9.6 13.6 L17.2 8 L17.2 10.2 L9.6 16 Z" fill="#f4f4f4" stroke="#2a0840" stroke-width="0.8"/><path d="M6.3 4.2 Q6.5 1 9.6 1 Q12.8 1.2 12.6 3.8 Q12.4 5.6 10.2 6.6 L10 8.4" fill="none" stroke="#303010" stroke-width="3.4" stroke-linecap="round"/><path d="M6.3 4.2 Q6.5 1 9.6 1 Q12.8 1.2 12.6 3.8 Q12.4 5.6 10.2 6.6 L10 8.4" fill="none" stroke="#fff030" stroke-width="1.9" stroke-linecap="round"/><circle cx="10" cy="11" r="1.5" fill="#fff030" stroke="#303010" stroke-width="0.7"/></g></svg><div style="position:absolute;left:3.5px;top:561px;width:200px;height:161px;border-top:1.5px solid #a8a8a8;border-left:1.5px solid #a8a8a8;"></div><div style="position:absolute;left:5.5px;top:563px;width:128px;height:20px;background:#f0f0f0;border:2px solid #303030;border-top:1.5px solid #303030;"></div><div style="position:absolute;left:132.5px;top:563px;width:51px;height:20px;background:#f0f0f0;border:2px solid #303030;border-left:1px solid #606060;border-top:1.5px solid #303030;"></div><div style="position:absolute;left:-131.5px;width:400px;top:566.7px;font-size:11.6px;line-height:11.6px;color:#111;white-space:nowrap;text-align:center;font-weight:bold;">Variable</div><div style="position:absolute;left:-42px;width:400px;top:566.7px;font-size:11.6px;line-height:11.6px;color:#111;white-space:nowrap;text-align:center;font-weight:bold;">Value</div><div style="position:absolute;left:5.5px;top:583px;width:127px;height:24px;background:#fff;border-right:1px solid #a0a0a0;border-bottom:1px solid #b0b0b0;border-left:1.5px solid #303030;"></div><div style="position:absolute;left:116px;top:584px;width:15px;height:22px;background:#e2e2e2;border:1px solid #b8b8b8;"></div><svg style="left:117px;top:590px" width="13" height="8" viewBox="0 0 13 8"><path d="M2.5 2 L6.5 6 L10.5 2" fill="none" stroke="#505050" stroke-width="1.1"/></svg><div style="position:absolute;left:132.5px;top:583px;width:51px;height:24px;background:#fff;border-right:1px solid #a0a0a0;border-bottom:1px solid #b0b0b0;"></div><div style="position:absolute;left:8.5px;top:584.97px;font-size:12.43px;line-height:18.65px;color:#111;white-space:nowrap;transform:scaleX(0.901);transform-origin:0 0;">Step Size</div><div style="position:absolute;left:148px;top:584.97px;font-size:12.43px;line-height:18.65px;color:#3a1a5a;white-space:nowrap;transform:scaleX(0.901);transform-origin:0 0;">1</div><div style="position:absolute;left:5.5px;top:607px;width:127px;height:24.5px;background:#f0f0f0;border-left:1.5px solid #303030;border-bottom:2.2px solid #303030;border-right:2px solid #303030;"></div><div style="position:absolute;left:132.5px;top:607px;width:51px;height:24px;background:#fff;border-right:1px solid #a0a0a0;border-bottom:1px solid #b0b0b0;"></div><div style="position:absolute;left:8.5px;top:609.37px;font-size:12.43px;line-height:18.65px;color:#111;white-space:nowrap;transform:scaleX(0.901);transform-origin:0 0;">None</div><div style="position:absolute;left:3.5px;top:720px;width:200px;height:1px;background:#fafafa;"></div><div style="position:absolute;left:3px;top:726px;width:201px;height:18.5px;background:#d9d9d9;"></div><div style="position:absolute;left:4.5px;top:726.37px;font-size:12.43px;line-height:18.65px;color:#111;white-space:nowrap;transform:scaleX(0.901);transform-origin:0 0;">Saved Tune States</div><div style="position:absolute;left:192px;top:728px;width:11px;height:14.5px;background:#f4f4f4;"></div><svg style="left:193px;top:731px" width="10" height="7" viewBox="0 0 10 7"><path d="M1 6 H9 L5 1 Z" fill="#111"/></svg><div style="position:absolute;left:3px;top:747px;width:201px;height:1.2px;background:#c4c4c4;"></div><div style="position:absolute;left:3px;top:752.5px;width:201px;height:17px;background:#d9d9d9;"></div><div style="position:absolute;left:4.5px;top:751.97px;font-size:12.43px;line-height:18.65px;color:#111;white-space:nowrap;transform:scaleX(0.901);transform-origin:0 0;">Analyses To Run (AutoRecalc)</div><div style="position:absolute;left:192px;top:754px;width:11px;height:14px;background:#f4f4f4;"></div><svg style="left:193px;top:758px" width="10" height="7" viewBox="0 0 10 7"><path d="M1 1 H9 L5 6 Z" fill="#111"/></svg><div style="position:absolute;left:3px;top:773.5px;width:202px;height:82.5px;background:#fff;border:1px solid #909090;"></div><div style="position:absolute;left:9.5px;top:777px;width:13.5px;height:13.5px;background:#fff;border:1px solid #333;"></div><svg style="left:26px;top:776px" width="17" height="17" viewBox="0 0 17 17"><circle cx="4" cy="4" r="3" fill="#c8d8ff" stroke="#a070ff" stroke-width="0.8"/><path d="M7 1.5 L13 4 L7 6.5 Z" fill="#c8e0ff" stroke="#a070ff" stroke-width="0.8"/><path d="M1 4 H16" stroke="#a070ff" stroke-width="0.6"/><text x="1" y="16" font-size="7" font-family="Liberation Sans" fill="#c060e0">SYS</text></svg><div style="position:absolute;left:44px;top:774.37px;font-size:12.43px;line-height:18.65px;color:#111;white-space:nowrap;transform:scaleX(0.893);transform-origin:0 0;">SystemRFAnalysis</div>
<div style="position:absolute;left:211px;top:94px;width:1136px;height:765px;background:#ababab;border-top:2px solid #505050;border-left:2px solid #505050;"></div>
<div style="position:absolute;left:211px;top:851.5px;width:1136px;height:3px;background:#f6f6f6;"></div>
<div style="position:absolute;left:211px;top:854.5px;width:1136px;height:3.5px;background:#dedede;"></div>
<div style="position:absolute;left:211px;top:858px;width:1136px;height:1.5px;background:#8e8e8e;"></div>
<div style="position:absolute;left:0;top:0;width:1347px;height:851.5px;overflow:hidden;">
<div style="position:absolute;left:795.5px;top:366px;width:549.5px;height:492px;background:linear-gradient(#c4d5e8 0px,#cfdced 22px,#d7e4f2 32px,#d7e4f2 100%);border:1px solid #5a5a5a;border-left-color:#c8d4e2;border-radius:6px 6px 0 0;box-shadow:inset 1px 1px 0 rgba(255,255,255,0.6), inset -1px 0 0 #e8f0f8;overflow:hidden;"></div><div style="position:absolute;left:1230.0px;top:375px;width:33px;height:19px;border:1px solid #9aa8bc;border-radius:3px;background:linear-gradient(#dbe6f3 0%,#d3e0ef 48%,#c8d6e8 52%,#d2dfee 100%);"></div><div style="position:absolute;left:1241.0px;top:384.0px;width:11px;height:5px;background:#fff;border:1px solid #44505e;border-radius:1.5px;"></div><div style="position:absolute;left:1265.5px;top:375px;width:33px;height:19px;border:1px solid #9aa8bc;border-radius:3px;background:linear-gradient(#dbe6f3 0%,#d3e0ef 48%,#c8d6e8 52%,#d2dfee 100%);"></div><div style="position:absolute;left:1276.5px;top:379.0px;width:11px;height:9px;background:#fff;border:1px solid #44505e;border-radius:1.5px;"><div style="position:absolute;left:2px;top:2px;width:5px;height:3px;background:#5a7090;"></div></div><div style="position:absolute;left:1301.0px;top:375px;width:33px;height:19px;border:1px solid #9aa8bc;border-radius:3px;background:linear-gradient(#dbe6f3 0%,#d3e0ef 48%,#c8d6e8 52%,#d2dfee 100%);"></div><svg style="left:1309.5px;top:378.0px" width="16" height="13" viewBox="0 0 16 13"><path d="M4.5 3 L11.5 10 M11.5 3 L4.5 10" stroke="#6a7280" stroke-width="3.6" stroke-linecap="round"/><path d="M4.5 3 L11.5 10 M11.5 3 L4.5 10" stroke="#f4f4f4" stroke-width="1.8" stroke-linecap="round"/></svg><svg style="left:805px;top:374px" width="17" height="17" viewBox="0 0 17 17"><rect x="1.5" y="1.5" width="13" height="12" fill="#fff" stroke="#505050" stroke-width="1"/><path d="M5.5 2 V13 M9.5 2 V13 M2 5.5 H14 M2 9.5 H14" stroke="#d8d8d8" stroke-width="0.8"/><path d="M2 11 L6 7 L9 9 L14 4" stroke="#e01010" stroke-width="1.8" fill="none"/><path d="M5 16 H11" stroke="#909090" stroke-width="0.8" stroke-dasharray="1 1"/></svg><div style="position:absolute;left:826.0px;top:375.63px;font-size:12.92px;line-height:19.38px;color:#a8a8a8;white-space:nowrap;transform:scaleX(0.929);transform-origin:0 0;">Budget Results (Workspace: <span style="letter-spacing:-0.1px">RFSE_upconverter</span>)</div><div style="position:absolute;left:803.5px;top:397.5px;width:532px;height:448.5px;background:#c0c0c0;border-top:1px solid #6a6a6a;border-left:1px solid #6a6a6a;border-right:1px solid #fdfdfd;border-bottom:1px solid #fdfdfd;overflow:hidden;"></div>
<svg style="left:0px;top:0px" width="1600" height="900" viewBox="0 0 1600 900"><defs><clipPath id="bdc"><rect x="804" y="399" width="530" height="445"/></clipPath></defs><g clip-path="url(#bdc)"><rect x="869.5" y="437.3" width="453.9000000000001" height="342.7" fill="#000"/><line x1="864" y1="780.0" x2="1323" y2="780.0" stroke="#8a8a8a" stroke-width="1.4"/><line x1="864" y1="745.7" x2="1323" y2="745.7" stroke="#8a8a8a" stroke-width="1.4"/><line x1="864" y1="711.5" x2="1323" y2="711.5" stroke="#8a8a8a" stroke-width="1.4"/><line x1="864" y1="677.2" x2="1323" y2="677.2" stroke="#8a8a8a" stroke-width="1.4"/><line x1="864" y1="642.9" x2="1323" y2="642.9" stroke="#8a8a8a" stroke-width="1.4"/><line x1="864" y1="608.6" x2="1323" y2="608.6" stroke="#8a8a8a" stroke-width="1.4"/><line x1="864" y1="574.4" x2="1323" y2="574.4" stroke="#8a8a8a" stroke-width="1.4"/><line x1="864" y1="540.1" x2="1323" y2="540.1" stroke="#8a8a8a" stroke-width="1.4"/><line x1="864" y1="505.8" x2="1323" y2="505.8" stroke="#8a8a8a" stroke-width="1.4"/><line x1="864" y1="471.5" x2="1323" y2="471.5" stroke="#8a8a8a" stroke-width="1.4"/><line x1="864" y1="437.2" x2="1323" y2="437.2" stroke="#8a8a8a" stroke-width="1.4"/><line x1="870.0" y1="437.3" x2="870.0" y2="785.5" stroke="#8a8a8a" stroke-width="1.4"/><line x1="902.4" y1="437.3" x2="902.4" y2="780" stroke="#8a8a8a" stroke-width="1.4"/><line x1="934.8" y1="437.3" x2="934.8" y2="785.5" stroke="#8a8a8a" stroke-width="1.4"/><line x1="967.2" y1="437.3" x2="967.2" y2="780" stroke="#8a8a8a" stroke-width="1.4"/><line x1="999.6" y1="437.3" x2="999.6" y2="785.5" stroke="#8a8a8a" stroke-width="1.4"/><line x1="1032.0" y1="437.3" x2="1032.0" y2="780" stroke="#8a8a8a" stroke-width="1.4"/><line x1="1064.4" y1="437.3" x2="1064.4" y2="785.5" stroke="#8a8a8a" stroke-width="1.4"/><line x1="1096.8" y1="437.3" x2="1096.8" y2="780" stroke="#8a8a8a" stroke-width="1.4"/><line x1="1129.2" y1="437.3" x2="1129.2" y2="785.5" stroke="#8a8a8a" stroke-width="1.4"/><line x1="1161.6" y1="437.3" x2="1161.6" y2="780" stroke="#8a8a8a" stroke-width="1.4"/><line x1="1194.0" y1="437.3" x2="1194.0" y2="785.5" stroke="#8a8a8a" stroke-width="1.4"/><line x1="1226.4" y1="437.3" x2="1226.4" y2="780" stroke="#8a8a8a" stroke-width="1.4"/><line x1="1258.8" y1="437.3" x2="1258.8" y2="785.5" stroke="#8a8a8a" stroke-width="1.4"/><line x1="1291.2" y1="437.3" x2="1291.2" y2="780" stroke="#8a8a8a" stroke-width="1.4"/><line x1="1323.6" y1="437.3" x2="1323.6" y2="785.5" stroke="#8a8a8a" stroke-width="1.4"/><path d="M870.0,780.0 L934.8,644.3 L999.6,651.0 L1064.4,684.6 L1129.2,693.1 L1194.0,563.1 L1258.8,571.7 L1323.6,443.6" fill="none" stroke="#ff0000" stroke-width="2.6" stroke-linejoin="round"/><path d="M870.0,775.5 L874.5,780.0 L870.0,784.5 L865.5,780.0 Z" fill="#ff0000"/><path d="M934.8,639.8 L939.3,644.3 L934.8,648.8 L930.3,644.3 Z" fill="#ff0000"/><path d="M999.6,646.5 L1004.1,651.0 L999.6,655.5 L995.1,651.0 Z" fill="#ff0000"/><path d="M1064.4,680.1 L1068.9,684.6 L1064.4,689.1 L1059.9,684.6 Z" fill="#ff0000"/><path d="M1129.2,688.6 L1133.7,693.1 L1129.2,697.6 L1124.7,693.1 Z" fill="#ff0000"/><path d="M1194.0,558.6 L1198.5,563.1 L1194.0,567.6 L1189.5,563.1 Z" fill="#ff0000"/><path d="M1258.8,567.2 L1263.3,571.7 L1258.8,576.2 L1254.3,571.7 Z" fill="#ff0000"/><path d="M1323.6,439.1 L1328.1,443.6 L1323.6,448.1 L1319.1,443.6 Z" fill="#ff0000"/><rect x="881.4" y="794" width="42" height="19.5" fill="#d6d6d6"/><line x1="885.4" y1="803.5" x2="919.4" y2="803.5" stroke="#222" stroke-width="1.2"/><path d="M896.4,795.5 L910.4,803.5 L896.4,811.5 Z" fill="#cfe4f8" stroke="#222" stroke-width="1.3"/><rect x="945.7" y="792" width="43" height="22.5" fill="#d6d6d6"/><line x1="949.2" y1="803" x2="985.2" y2="803" stroke="#222" stroke-width="1.2"/><rect x="958.7" y="794.5" width="17" height="17" fill="#fff" stroke="#1a1aff" stroke-width="1.8"/><path d="M961.2,799 q3,-4 6,0 t6,0" stroke="#ff2020" fill="none" stroke-width="1.2"/><path d="M961.2,803 q3,-3 6,0 t6,0" stroke="#222" fill="none" stroke-width="1.2"/><path d="M961.2,807 q3,-4 6,0 t6,0" stroke="#ff2020" fill="none" stroke-width="1.2"/><rect x="1011.0" y="788" width="42" height="31.5" fill="#d6d6d6"/><line x1="1013.0" y1="797" x2="1051.0" y2="797" stroke="#222" stroke-width="1.2"/><line x1="1032.0" y1="797" x2="1032.0" y2="818" stroke="#222" stroke-width="1.2"/><circle cx="1032.0" cy="797" r="7.5" fill="#fff" stroke="#1a1aff" stroke-width="1.6"/><path d="M1027.0,792 L1037.0,802 M1037.0,792 L1027.0,802" stroke="#1a1aff" stroke-width="1.2"/><path d="M1029.0,791.5 H1035.0" stroke="#ff2020" stroke-width="1.5"/><rect x="1075.3" y="792" width="43" height="22.5" fill="#d6d6d6"/><line x1="1078.8" y1="803" x2="1114.8" y2="803" stroke="#222" stroke-width="1.2"/><rect x="1088.3" y="794.5" width="17" height="17" fill="#fff" stroke="#1a1aff" stroke-width="1.8"/><path d="M1090.8,799 q3,-4 6,0 t6,0" stroke="#ff2020" fill="none" stroke-width="1.2"/><path d="M1090.8,803 q3,-3 6,0 t6,0" stroke="#222" fill="none" stroke-width="1.2"/><path d="M1090.8,807 q3,-4 6,0 t6,0" stroke="#ff2020" fill="none" stroke-width="1.2"/><rect x="1140.6" y="794" width="42" height="19.5" fill="#d6d6d6"/><line x1="1144.6" y1="803.5" x2="1178.6" y2="803.5" stroke="#222" stroke-width="1.2"/><path d="M1155.6,795.5 L1169.6,803.5 L1155.6,811.5 Z" fill="#fff" stroke="#1a1aff" stroke-width="1.3"/><line x1="1158.6" y1="803.5" x2="1163.6" y2="803.5" stroke="#ff2020" stroke-width="1.8"/><rect x="1204.9" y="792" width="43" height="22.5" fill="#d6d6d6"/><line x1="1208.4" y1="803" x2="1244.4" y2="803" stroke="#222" stroke-width="1.2"/><rect x="1217.9" y="794.5" width="17" height="17" fill="#fff" stroke="#1a1aff" stroke-width="1.8"/><path d="M1220.4,799 q3,-4 6,0 t6,0" stroke="#ff2020" fill="none" stroke-width="1.2"/><path d="M1220.4,803 q3,-3 6,0 t6,0" stroke="#222" fill="none" stroke-width="1.2"/><path d="M1220.4,807 q3,-4 6,0 t6,0" stroke="#ff2020" fill="none" stroke-width="1.2"/><rect x="1270.2" y="794" width="42" height="19.5" fill="#d6d6d6"/><line x1="1274.2" y1="803.5" x2="1308.2" y2="803.5" stroke="#222" stroke-width="1.2"/><path d="M1285.2,795.5 L1299.2,803.5 L1285.2,811.5 Z" fill="#fff" stroke="#1a1aff" stroke-width="1.3"/><line x1="1288.2" y1="803.5" x2="1293.2" y2="803.5" stroke="#ff2020" stroke-width="1.8"/></g></svg><div style="position:absolute;left:455px;width:400px;top:770.4px;font-size:18px;line-height:18px;color:#ff1a1a;white-space:nowrap;text-align:right;-webkit-text-stroke:0.4px #ff1a1a;">0</div><div style="position:absolute;left:455px;width:400px;top:736.1px;font-size:18px;line-height:18px;color:#ff1a1a;white-space:nowrap;text-align:right;-webkit-text-stroke:0.4px #ff1a1a;">5</div><div style="position:absolute;left:455px;width:400px;top:701.8px;font-size:18px;line-height:18px;color:#ff1a1a;white-space:nowrap;text-align:right;-webkit-text-stroke:0.4px #ff1a1a;">10</div><div style="position:absolute;left:455px;width:400px;top:667.5px;font-size:18px;line-height:18px;color:#ff1a1a;white-space:nowrap;text-align:right;-webkit-text-stroke:0.4px #ff1a1a;">15</div><div style="position:absolute;left:455px;width:400px;top:633.3px;font-size:18px;line-height:18px;color:#ff1a1a;white-space:nowrap;text-align:right;-webkit-text-stroke:0.4px #ff1a1a;">20</div><div style="position:absolute;left:455px;width:400px;top:599.0px;font-size:18px;line-height:18px;color:#ff1a1a;white-space:nowrap;text-align:right;-webkit-text-stroke:0.4px #ff1a1a;">25</div><div style="position:absolute;left:455px;width:400px;top:564.7px;font-size:18px;line-height:18px;color:#ff1a1a;white-space:nowrap;text-align:right;-webkit-text-stroke:0.4px #ff1a1a;">30</div><div style="position:absolute;left:455px;width:400px;top:530.4px;font-size:18px;line-height:18px;color:#ff1a1a;white-space:nowrap;text-align:right;-webkit-text-stroke:0.4px #ff1a1a;">35</div><div style="position:absolute;left:455px;width:400px;top:496.2px;font-size:18px;line-height:18px;color:#ff1a1a;white-space:nowrap;text-align:right;-webkit-text-stroke:0.4px #ff1a1a;">40</div><div style="position:absolute;left:455px;width:400px;top:461.9px;font-size:18px;line-height:18px;color:#ff1a1a;white-space:nowrap;text-align:right;-webkit-text-stroke:0.4px #ff1a1a;">45</div><div style="position:absolute;left:455px;width:400px;top:427.6px;font-size:18px;line-height:18px;color:#ff1a1a;white-space:nowrap;text-align:right;-webkit-text-stroke:0.4px #ff1a1a;">50</div><div style="position:absolute;left:670.0px;width:400px;top:792.3px;font-size:18px;line-height:18px;color:#111;white-space:nowrap;text-align:center;-webkit-text-stroke:0.3px #111;">1</div><div style="position:absolute;left:734.8px;width:400px;top:792.3px;font-size:18px;line-height:18px;color:#111;white-space:nowrap;text-align:center;-webkit-text-stroke:0.3px #111;">9</div><div style="position:absolute;left:799.6px;width:400px;top:792.3px;font-size:18px;line-height:18px;color:#111;white-space:nowrap;text-align:center;-webkit-text-stroke:0.3px #111;">7</div><div style="position:absolute;left:864.4000000000001px;width:400px;top:792.3px;font-size:18px;line-height:18px;color:#111;white-space:nowrap;text-align:center;-webkit-text-stroke:0.3px #111;">6</div><div style="position:absolute;left:929.2px;width:400px;top:792.3px;font-size:18px;line-height:18px;color:#111;white-space:nowrap;text-align:center;-webkit-text-stroke:0.3px #111;">5</div><div style="position:absolute;left:994.0px;width:400px;top:792.3px;font-size:18px;line-height:18px;color:#111;white-space:nowrap;text-align:center;-webkit-text-stroke:0.3px #111;">10</div><div style="position:absolute;left:1058.8px;width:400px;top:792.3px;font-size:18px;line-height:18px;color:#111;white-space:nowrap;text-align:center;-webkit-text-stroke:0.3px #111;">4</div><div style="position:absolute;left:1123.6px;width:400px;top:792.3px;font-size:18px;line-height:18px;color:#111;white-space:nowrap;text-align:center;-webkit-text-stroke:0.3px #111;">2</div><div style="position:absolute;left:702.4px;width:400px;top:816.4px;font-size:6px;line-height:6px;color:#333;white-space:nowrap;text-align:center;">IF_AMP1</div><div style="position:absolute;left:767.2px;width:400px;top:817.9px;font-size:6px;line-height:6px;color:#333;white-space:nowrap;text-align:center;">IF_BPF1</div><div style="position:absolute;left:832.0px;width:400px;top:822.9px;font-size:6px;line-height:6px;color:#333;white-space:nowrap;text-align:center;">Mixer1</div><div style="position:absolute;left:896.8px;width:400px;top:817.9px;font-size:6px;line-height:6px;color:#333;white-space:nowrap;text-align:center;">BPF1</div><div style="position:absolute;left:961.5999999999999px;width:400px;top:816.4px;font-size:6px;line-height:6px;color:#333;white-space:nowrap;text-align:center;">Amp1</div><div style="position:absolute;left:1026.4px;width:400px;top:817.9px;font-size:6px;line-height:6px;color:#333;white-space:nowrap;text-align:center;">BPF2</div><div style="position:absolute;left:1091.2px;width:400px;top:816.4px;font-size:6px;line-height:6px;color:#333;white-space:nowrap;text-align:center;">Amp2</div><div style="position:absolute;left:1047.5px;top:818.0px;font-size:18.2px;line-height:18.2px;color:#111;white-space:nowrap;-webkit-text-stroke:0.3px #111;">Node</div><div style="position:absolute;left:772px;top:611px;width:100px;height:22px;font-size:18.5px;line-height:22px;color:#ff1a1a;text-align:center;transform:rotate(-90deg);white-space:nowrap;-webkit-text-stroke:0.35px #ff1a1a;">CGAIN (dB)</div>
<div style="position:absolute;left:796px;top:96px;width:549px;height:269px;background:linear-gradient(#c4d5e8 0px,#cfdced 22px,#d7e4f2 32px,#d7e4f2 100%);border:1px solid #5a5a5a;border-left-color:#5a5a5a;border-radius:6px 6px 0 0;box-shadow:inset 1px 1px 0 rgba(255,255,255,0.6), inset -1px 0 0 #e8f0f8;overflow:hidden;"></div><div style="position:absolute;left:1230.5px;top:104.5px;width:33px;height:19px;border:1px solid #9aa8bc;border-radius:3px;background:linear-gradient(#dbe6f3 0%,#d3e0ef 48%,#c8d6e8 52%,#d2dfee 100%);"></div><div style="position:absolute;left:1241.5px;top:113.5px;width:11px;height:5px;background:#fff;border:1px solid #44505e;border-radius:1.5px;"></div><div style="position:absolute;left:1266.0px;top:104.5px;width:33px;height:19px;border:1px solid #9aa8bc;border-radius:3px;background:linear-gradient(#dbe6f3 0%,#d3e0ef 48%,#c8d6e8 52%,#d2dfee 100%);"></div><div style="position:absolute;left:1277.0px;top:108.5px;width:11px;height:9px;background:#fff;border:1px solid #44505e;border-radius:1.5px;"><div style="position:absolute;left:2px;top:2px;width:5px;height:3px;background:#5a7090;"></div></div><div style="position:absolute;left:1301.5px;top:104.5px;width:33px;height:19px;border:1px solid #9aa8bc;border-radius:3px;background:linear-gradient(#dbe6f3 0%,#d3e0ef 48%,#c8d6e8 52%,#d2dfee 100%);"></div><svg style="left:1310.0px;top:107.5px" width="16" height="13" viewBox="0 0 16 13"><path d="M4.5 3 L11.5 10 M11.5 3 L4.5 10" stroke="#6a7280" stroke-width="3.6" stroke-linecap="round"/><path d="M4.5 3 L11.5 10 M11.5 3 L4.5 10" stroke="#f4f4f4" stroke-width="1.8" stroke-linecap="round"/></svg><svg style="left:804.5px;top:106px" width="16" height="16" viewBox="0 0 16 16"><rect x="0.5" y="0.5" width="15" height="15" fill="#c8c8c8" stroke="#606060"/><rect x="6" y="1.5" width="9" height="13" fill="#fff"/><rect x="1.5" y="1.5" width="4" height="6" fill="#e8e8e8"/><rect x="1.5" y="8.5" width="4" height="6" fill="#e8e8e8"/><path d="M7 4 H14 M7 6 H14 M7 11 H14 M7 13 H14" stroke="#2020c0" stroke-width="1.3" stroke-dasharray="2 1"/><path d="M2.5 3 H4.5 M2.5 5 H4.5 M2.5 10 H4.5 M2.5 12 H4.5" stroke="#303030" stroke-width="1"/></svg><div style="position:absolute;left:826.5px;top:105.03px;font-size:12.92px;line-height:19.38px;color:#a8a8a8;white-space:nowrap;transform:scaleX(0.929);transform-origin:0 0;">Budget Measurements Table (Workspace: RFSE_upconverter)</div><div style="position:absolute;left:803.5px;top:127.5px;width:532px;height:227px;background:#fff;border-top:1px solid #6a6a6a;border-left:1px solid #6a6a6a;border-right:1px solid #fdfdfd;border-bottom:1px solid #fdfdfd;overflow:hidden;"></div>
<div style="position:absolute;left:804px;top:129px;width:531px;height:206px;background:#fff;"></div><div style="position:absolute;left:808px;top:129px;width:1px;height:210px;background:#f0f0f0;"></div><div style="position:absolute;left:885px;top:129px;width:1px;height:210px;background:#f0f0f0;"></div><div style="position:absolute;left:967px;top:129px;width:1px;height:210px;background:#f0f0f0;"></div><div style="position:absolute;left:1062px;top:129px;width:1px;height:210px;background:#f0f0f0;"></div><div style="position:absolute;left:1150px;top:129px;width:1px;height:210px;background:#f0f0f0;"></div><div style="position:absolute;left:1242px;top:129px;width:1px;height:210px;background:#f0f0f0;"></div><div style="position:absolute;left:1329px;top:129px;width:1px;height:210px;background:#f0f0f0;"></div><div style="position:absolute;left:808px;top:149.5px;width:521px;height:1px;background:#f0f0f0;"></div><div style="position:absolute;left:808px;top:170.5px;width:521px;height:1px;background:#f0f0f0;"></div><div style="position:absolute;left:808px;top:191.5px;width:521px;height:1px;background:#f0f0f0;"></div><div style="position:absolute;left:808px;top:212.5px;width:521px;height:1px;background:#f0f0f0;"></div><div style="position:absolute;left:808px;top:233.5px;width:521px;height:1px;background:#f0f0f0;"></div><div style="position:absolute;left:808px;top:254.5px;width:521px;height:1px;background:#f0f0f0;"></div><div style="position:absolute;left:808px;top:275.5px;width:521px;height:1px;background:#f0f0f0;"></div><div style="position:absolute;left:808px;top:296.5px;width:521px;height:1px;background:#f0f0f0;"></div><div style="position:absolute;left:808px;top:317.5px;width:521px;height:1px;background:#f0f0f0;"></div><div style="position:absolute;left:808px;top:338.5px;width:521px;height:1px;background:#f0f0f0;"></div><div style="position:absolute;left:478.5px;width:400px;top:132.2px;font-size:14.3px;line-height:14.3px;color:#111;white-space:nowrap;text-align:right;-webkit-text-stroke:0.2px #111;">Parts</div><div style="position:absolute;left:560.5px;width:400px;top:132.2px;font-size:14.3px;line-height:14.3px;color:#111;white-space:nowrap;text-align:right;-webkit-text-stroke:0.2px #111;">CF (MHz)</div><div style="position:absolute;left:655.5px;width:400px;top:132.2px;font-size:14.3px;line-height:14.3px;color:#111;white-space:nowrap;text-align:right;-webkit-text-stroke:0.2px #111;">CGAIN (dB)</div><div style="position:absolute;left:743.5px;width:400px;top:132.2px;font-size:14.3px;line-height:14.3px;color:#111;white-space:nowrap;text-align:right;-webkit-text-stroke:0.2px #111;">DCP (dBm)</div><div style="position:absolute;left:835.5px;width:400px;top:132.2px;font-size:14.3px;line-height:14.3px;color:#111;white-space:nowrap;text-align:right;-webkit-text-stroke:0.2px #111;">CNDR (dB)</div><div style="position:absolute;left:922.5px;width:400px;top:132.2px;font-size:14.3px;line-height:14.3px;color:#111;white-space:nowrap;text-align:right;-webkit-text-stroke:0.2px #111;">CNP (dBm)</div><div style="position:absolute;left:478.5px;width:400px;top:153.8px;font-size:14.3px;line-height:14.3px;color:#111;white-space:nowrap;text-align:right;-webkit-text-stroke:0.2px #111;">Source1</div><div style="position:absolute;left:560.5px;width:400px;top:153.8px;font-size:14.3px;line-height:14.3px;color:#111;white-space:nowrap;text-align:right;-webkit-text-stroke:0.2px #111;">2200</div><div style="position:absolute;left:655.5px;width:400px;top:153.8px;font-size:14.3px;line-height:14.3px;color:#111;white-space:nowrap;text-align:right;-webkit-text-stroke:0.2px #111;">0</div><div style="position:absolute;left:743.5px;width:400px;top:153.8px;font-size:14.3px;line-height:14.3px;color:#111;white-space:nowrap;text-align:right;-webkit-text-stroke:0.2px #111;">-40</div><div style="position:absolute;left:835.5px;width:400px;top:153.8px;font-size:14.3px;line-height:14.3px;color:#111;white-space:nowrap;text-align:right;-webkit-text-stroke:0.2px #111;">73.975</div><div style="position:absolute;left:922.5px;width:400px;top:153.8px;font-size:14.3px;line-height:14.3px;color:#111;white-space:nowrap;text-align:right;-webkit-text-stroke:0.2px #111;">-113.975</div><div style="position:absolute;left:478.5px;width:400px;top:174.7px;font-size:14.3px;line-height:14.3px;color:#111;white-space:nowrap;text-align:right;-webkit-text-stroke:0.2px #111;">IF_AMP1</div><div style="position:absolute;left:560.5px;width:400px;top:174.7px;font-size:14.3px;line-height:14.3px;color:#111;white-space:nowrap;text-align:right;-webkit-text-stroke:0.2px #111;">2200</div><div style="position:absolute;left:655.5px;width:400px;top:174.7px;font-size:14.3px;line-height:14.3px;color:#111;white-space:nowrap;text-align:right;-webkit-text-stroke:0.2px #111;">19.798</div><div style="position:absolute;left:743.5px;width:400px;top:174.7px;font-size:14.3px;line-height:14.3px;color:#111;white-space:nowrap;text-align:right;-webkit-text-stroke:0.2px #111;">-20.202</div><div style="position:absolute;left:835.5px;width:400px;top:174.7px;font-size:14.3px;line-height:14.3px;color:#111;white-space:nowrap;text-align:right;-webkit-text-stroke:0.2px #111;">70.975</div><div style="position:absolute;left:922.5px;width:400px;top:174.7px;font-size:14.3px;line-height:14.3px;color:#111;white-space:nowrap;text-align:right;-webkit-text-stroke:0.2px #111;">-91.177</div><div style="position:absolute;left:478.5px;width:400px;top:195.7px;font-size:14.3px;line-height:14.3px;color:#111;white-space:nowrap;text-align:right;-webkit-text-stroke:0.2px #111;">IF_BPF1</div><div style="position:absolute;left:560.5px;width:400px;top:195.7px;font-size:14.3px;line-height:14.3px;color:#111;white-space:nowrap;text-align:right;-webkit-text-stroke:0.2px #111;">2200</div><div style="position:absolute;left:655.5px;width:400px;top:195.7px;font-size:14.3px;line-height:14.3px;color:#111;white-space:nowrap;text-align:right;-webkit-text-stroke:0.2px #111;">18.815</div><div style="position:absolute;left:743.5px;width:400px;top:195.7px;font-size:14.3px;line-height:14.3px;color:#111;white-space:nowrap;text-align:right;-webkit-text-stroke:0.2px #111;">-21.185</div><div style="position:absolute;left:835.5px;width:400px;top:195.7px;font-size:14.3px;line-height:14.3px;color:#111;white-space:nowrap;text-align:right;-webkit-text-stroke:0.2px #111;">70.969</div><div style="position:absolute;left:922.5px;width:400px;top:195.7px;font-size:14.3px;line-height:14.3px;color:#111;white-space:nowrap;text-align:right;-webkit-text-stroke:0.2px #111;">-92.155</div><div style="position:absolute;left:478.5px;width:400px;top:216.6px;font-size:14.3px;line-height:14.3px;color:#111;white-space:nowrap;text-align:right;-webkit-text-stroke:0.2px #111;">Mixer1</div><div style="position:absolute;left:560.5px;width:400px;top:216.6px;font-size:14.3px;line-height:14.3px;color:#111;white-space:nowrap;text-align:right;-webkit-text-stroke:0.2px #111;">10000</div><div style="position:absolute;left:655.5px;width:400px;top:216.6px;font-size:14.3px;line-height:14.3px;color:#111;white-space:nowrap;text-align:right;-webkit-text-stroke:0.2px #111;">13.923</div><div style="position:absolute;left:743.5px;width:400px;top:216.6px;font-size:14.3px;line-height:14.3px;color:#111;white-space:nowrap;text-align:right;-webkit-text-stroke:0.2px #111;">-26.077</div><div style="position:absolute;left:835.5px;width:400px;top:216.6px;font-size:14.3px;line-height:14.3px;color:#111;white-space:nowrap;text-align:right;-webkit-text-stroke:0.2px #111;">63.729</div><div style="position:absolute;left:922.5px;width:400px;top:216.6px;font-size:14.3px;line-height:14.3px;color:#111;white-space:nowrap;text-align:right;-webkit-text-stroke:0.2px #111;">-97.03</div><div style="position:absolute;left:478.5px;width:400px;top:237.6px;font-size:14.3px;line-height:14.3px;color:#111;white-space:nowrap;text-align:right;-webkit-text-stroke:0.2px #111;">BPF1</div><div style="position:absolute;left:560.5px;width:400px;top:237.6px;font-size:14.3px;line-height:14.3px;color:#111;white-space:nowrap;text-align:right;-webkit-text-stroke:0.2px #111;">10000</div><div style="position:absolute;left:655.5px;width:400px;top:237.6px;font-size:14.3px;line-height:14.3px;color:#111;white-space:nowrap;text-align:right;-webkit-text-stroke:0.2px #111;">12.677</div><div style="position:absolute;left:743.5px;width:400px;top:237.6px;font-size:14.3px;line-height:14.3px;color:#111;white-space:nowrap;text-align:right;-webkit-text-stroke:0.2px #111;">-27.323</div><div style="position:absolute;left:835.5px;width:400px;top:237.6px;font-size:14.3px;line-height:14.3px;color:#111;white-space:nowrap;text-align:right;-webkit-text-stroke:0.2px #111;">63.724</div><div style="position:absolute;left:922.5px;width:400px;top:237.6px;font-size:14.3px;line-height:14.3px;color:#111;white-space:nowrap;text-align:right;-webkit-text-stroke:0.2px #111;">-98.249</div><div style="position:absolute;left:478.5px;width:400px;top:258.5px;font-size:14.3px;line-height:14.3px;color:#111;white-space:nowrap;text-align:right;-webkit-text-stroke:0.2px #111;">Amp1</div><div style="position:absolute;left:560.5px;width:400px;top:258.5px;font-size:14.3px;line-height:14.3px;color:#111;white-space:nowrap;text-align:right;-webkit-text-stroke:0.2px #111;">10000</div><div style="position:absolute;left:655.5px;width:400px;top:258.5px;font-size:14.3px;line-height:14.3px;color:#111;white-space:nowrap;text-align:right;-webkit-text-stroke:0.2px #111;">31.634</div><div style="position:absolute;left:743.5px;width:400px;top:258.5px;font-size:14.3px;line-height:14.3px;color:#111;white-space:nowrap;text-align:right;-webkit-text-stroke:0.2px #111;">-8.366</div><div style="position:absolute;left:835.5px;width:400px;top:258.5px;font-size:14.3px;line-height:14.3px;color:#111;white-space:nowrap;text-align:right;-webkit-text-stroke:0.2px #111;">62.49</div><div style="position:absolute;left:922.5px;width:400px;top:258.5px;font-size:14.3px;line-height:14.3px;color:#111;white-space:nowrap;text-align:right;-webkit-text-stroke:0.2px #111;">-79.14</div><div style="position:absolute;left:478.5px;width:400px;top:279.5px;font-size:14.3px;line-height:14.3px;color:#111;white-space:nowrap;text-align:right;-webkit-text-stroke:0.2px #111;">BPF2</div><div style="position:absolute;left:560.5px;width:400px;top:279.5px;font-size:14.3px;line-height:14.3px;color:#111;white-space:nowrap;text-align:right;-webkit-text-stroke:0.2px #111;">10000</div><div style="position:absolute;left:655.5px;width:400px;top:279.5px;font-size:14.3px;line-height:14.3px;color:#111;white-space:nowrap;text-align:right;-webkit-text-stroke:0.2px #111;">30.388</div><div style="position:absolute;left:743.5px;width:400px;top:279.5px;font-size:14.3px;line-height:14.3px;color:#111;white-space:nowrap;text-align:right;-webkit-text-stroke:0.2px #111;">-9.612</div><div style="position:absolute;left:835.5px;width:400px;top:279.5px;font-size:14.3px;line-height:14.3px;color:#111;white-space:nowrap;text-align:right;-webkit-text-stroke:0.2px #111;">62.49</div><div style="position:absolute;left:922.5px;width:400px;top:279.5px;font-size:14.3px;line-height:14.3px;color:#111;white-space:nowrap;text-align:right;-webkit-text-stroke:0.2px #111;">-80.385</div><div style="position:absolute;left:478.5px;width:400px;top:300.4px;font-size:14.3px;line-height:14.3px;color:#111;white-space:nowrap;text-align:right;-webkit-text-stroke:0.2px #111;">Amp2</div><div style="position:absolute;left:560.5px;width:400px;top:300.4px;font-size:14.3px;line-height:14.3px;color:#111;white-space:nowrap;text-align:right;-webkit-text-stroke:0.2px #111;">10000</div><div style="position:absolute;left:655.5px;width:400px;top:300.4px;font-size:14.3px;line-height:14.3px;color:#111;white-space:nowrap;text-align:right;-webkit-text-stroke:0.2px #111;">49.067</div><div style="position:absolute;left:743.5px;width:400px;top:300.4px;font-size:14.3px;line-height:14.3px;color:#111;white-space:nowrap;text-align:right;-webkit-text-stroke:0.2px #111;">9.067</div><div style="position:absolute;left:835.5px;width:400px;top:300.4px;font-size:14.3px;line-height:14.3px;color:#111;white-space:nowrap;text-align:right;-webkit-text-stroke:0.2px #111;">32.574</div><div style="position:absolute;left:922.5px;width:400px;top:300.4px;font-size:14.3px;line-height:14.3px;color:#111;white-space:nowrap;text-align:right;-webkit-text-stroke:0.2px #111;">-61.703</div><div style="position:absolute;left:804px;top:335px;width:531px;height:18px;background:#f0f0f0;"></div><div style="position:absolute;left:886px;top:337px;width:249px;height:14px;background:#cdcdcd;"></div><svg style="left:806px;top:337px" width="12" height="14" viewBox="0 0 12 14"><path d="M8 3 L4 7 L8 11" fill="none" stroke="#606060" stroke-width="1.6"/></svg><svg style="left:1319px;top:337px" width="12" height="14" viewBox="0 0 12 14"><path d="M4 3 L8 7 L4 11" fill="none" stroke="#606060" stroke-width="1.6"/></svg>
<div style="position:absolute;left:212px;top:548px;width:582.5px;height:303.5px;background:linear-gradient(#c4d5e8 0px,#cfdced 22px,#d7e4f2 32px,#d7e4f2 100%);border:1px solid #5a5a5a;border-left-color:#5a5a5a;border-radius:0px 0px 0 0;box-shadow:inset 1px 1px 0 rgba(255,255,255,0.6), inset -1px 0 0 #e8f0f8;overflow:hidden;"></div><div style="position:absolute;left:683.5px;top:550px;width:33px;height:19px;border:1px solid #9aa8bc;border-radius:3px;background:linear-gradient(#dbe6f3 0%,#d3e0ef 48%,#c8d6e8 52%,#d2dfee 100%);"></div><div style="position:absolute;left:694.5px;top:559.0px;width:11px;height:5px;background:#fff;border:1px solid #44505e;border-radius:1.5px;"></div><div style="position:absolute;left:719.0px;top:550px;width:33px;height:19px;border:1px solid #9aa8bc;border-radius:3px;background:linear-gradient(#dbe6f3 0%,#d3e0ef 48%,#c8d6e8 52%,#d2dfee 100%);"></div><div style="position:absolute;left:730.0px;top:554.0px;width:11px;height:9px;background:#fff;border:1px solid #44505e;border-radius:1.5px;"><div style="position:absolute;left:2px;top:2px;width:5px;height:3px;background:#5a7090;"></div></div><div style="position:absolute;left:754.5px;top:550px;width:33px;height:19px;border:1px solid #9aa8bc;border-radius:3px;background:linear-gradient(#dbe6f3 0%,#d3e0ef 48%,#c8d6e8 52%,#d2dfee 100%);"></div><svg style="left:763.0px;top:553.0px" width="16" height="13" viewBox="0 0 16 13"><path d="M4.5 3 L11.5 10 M11.5 3 L4.5 10" stroke="#6a7280" stroke-width="3.6" stroke-linecap="round"/><path d="M4.5 3 L11.5 10 M11.5 3 L4.5 10" stroke="#f4f4f4" stroke-width="1.8" stroke-linecap="round"/></svg><svg style="left:222px;top:551px" width="17" height="17" viewBox="0 0 17 17"><rect x="0" y="0" width="17" height="17" rx="1.5" fill="#4a2c7a"/><rect x="0" y="12" width="17" height="2.5" fill="#2a2a3a"/><rect x="0" y="14.5" width="17" height="2.5" fill="#e0102a"/><path d="M6 3 L12 7 L6 11 Z" fill="#4ab8f0"/><path d="M1.5 7 H6 M12 7 H15.5" stroke="#fff" stroke-width="1.2"/><circle cx="3" cy="7" r="1" fill="#fff"/><circle cx="14" cy="7" r="1" fill="#fff"/></svg><div style="position:absolute;left:242.5px;top:550.83px;font-size:12.92px;line-height:19.38px;color:#a8a8a8;white-space:nowrap;transform:scaleX(0.929);transform-origin:0 0;">Design (Workspace: RFSE_upconverter)</div><div style="position:absolute;left:221px;top:573.5px;width:567px;height:268px;background:#f0f0f0;border-top:1px solid #6a6a6a;border-left:1px solid #6a6a6a;border-right:1px solid #fdfdfd;border-bottom:1px solid #fdfdfd;overflow:hidden;"></div>
<div style="position:absolute;left:222px;top:574.5px;width:545px;height:225.5px;background:#fff;border-top:3px solid #f0f0f0;border-left:2px solid #f4f4f4;"></div><div style="position:absolute;left:767px;top:574.5px;width:20px;height:225.5px;background:#f0f0f0;"></div><div style="position:absolute;left:768px;top:645px;width:17px;height:86px;background:#cdcdcd;"></div><svg style="left:769px;top:582px" width="14" height="12" viewBox="0 0 14 12"><path d="M3 8 L7 4 L11 8" fill="none" stroke="#606060" stroke-width="1.6"/></svg><svg style="left:769px;top:784px" width="14" height="12" viewBox="0 0 14 12"><path d="M3 4 L7 8 L11 4" fill="none" stroke="#606060" stroke-width="1.6"/></svg><div style="position:absolute;left:222px;top:800px;width:545px;height:16px;background:#f0f0f0;"></div><div style="position:absolute;left:370px;top:800px;width:313px;height:16px;background:#cdcdcd;"></div><svg style="left:228px;top:802px" width="12" height="12" viewBox="0 0 12 12"><path d="M8 2 L4 6 L8 10" fill="none" stroke="#404040" stroke-width="1.6"/></svg><svg style="left:751px;top:802px" width="12" height="12" viewBox="0 0 12 12"><path d="M4 2 L8 6 L4 10" fill="none" stroke="#404040" stroke-width="1.6"/></svg><div style="position:absolute;left:222px;top:816px;width:565px;height:25px;background:#f0f0f0;"></div><div style="position:absolute;left:313px;top:817.5px;width:474px;height:1.5px;background:#6e6e6e;"></div><div style="position:absolute;left:785.5px;top:574.5px;width:1.5px;height:244.5px;background:#6e6e6e;"></div><div style="position:absolute;left:224px;top:817px;width:89px;height:23px;background:#e4e4e4;border-right:1.5px solid #6e6e6e;border-bottom:1.5px solid #6e6e6e;border-radius:0 0 3px 0;"></div><svg style="left:227px;top:820px" width="20" height="18" viewBox="0 0 20 18"><path d="M2.5 2 L17 9 L2.5 16 Z" fill="#fafafa" stroke="#505050" stroke-width="1"/><path d="M0 9 H3 M17 9 H20" stroke="#3030a0" stroke-width="1" stroke-dasharray="1 1"/><path d="M9 14 V18" stroke="#3030c0" stroke-width="1.2"/></svg><div style="position:absolute;left:248.5px;top:822.7px;font-size:12.2px;line-height:12.2px;color:#111;white-space:nowrap;font-weight:bold;letter-spacing:-0.2px;">Schematic</div><svg style="left:0px;top:0px" width="1600" height="900" viewBox="0 0 1600 900"><path d="M249.5,709 V691.3 H301.6" fill="none" stroke="#2a2ab8" stroke-width="1.2"/><path d="M275,691.3 H301.6" stroke="#222" stroke-width="1.2"/><path d="M320.6,691.3 H363.2" stroke="#2a2ab8" stroke-width="1.2"/><path d="M320.6,691.3 H335.51" stroke="#222" stroke-width="1.2"/><path d="M350.42,691.3 H363.2" stroke="#222" stroke-width="1.2"/><circle cx="347.0" cy="691.3" r="1.3" fill="#222"/><path d="M385.3,691.3 H432" stroke="#2a2ab8" stroke-width="1.2"/><path d="M385.3,691.3 H401.645" stroke="#222" stroke-width="1.2"/><path d="M417.99,691.3 H432" stroke="#222" stroke-width="1.2"/><circle cx="414.3" cy="691.3" r="1.3" fill="#222"/><path d="M452,691.3 H499.2" stroke="#2a2ab8" stroke-width="1.2"/><path d="M452,691.3 H468.52" stroke="#222" stroke-width="1.2"/><path d="M485.03999999999996,691.3 H499.2" stroke="#222" stroke-width="1.2"/><circle cx="481.3" cy="691.3" r="1.3" fill="#222"/><path d="M521.9,691.3 H568" stroke="#2a2ab8" stroke-width="1.2"/><path d="M521.9,691.3 H538.035" stroke="#222" stroke-width="1.2"/><path d="M554.17,691.3 H568" stroke="#222" stroke-width="1.2"/><circle cx="550.5" cy="691.3" r="1.3" fill="#222"/><path d="M588,691.3 H636.5" stroke="#2a2ab8" stroke-width="1.2"/><path d="M588,691.3 H604.975" stroke="#222" stroke-width="1.2"/><path d="M621.95,691.3 H636.5" stroke="#222" stroke-width="1.2"/><circle cx="618.1" cy="691.3" r="1.3" fill="#222"/><path d="M657.9,691.3 H698.7" stroke="#2a2ab8" stroke-width="1.2"/><path d="M657.9,691.3 H672.18" stroke="#222" stroke-width="1.2"/><path d="M686.46,691.3 H698.7" stroke="#222" stroke-width="1.2"/><circle cx="683.2" cy="691.3" r="1.3" fill="#222"/><path d="M718.7,691.3 H745.9 V709.3" fill="none" stroke="#2a2ab8" stroke-width="1.2"/><path d="M442,701.3 V740.6 H409.4" fill="none" stroke="#2a2ab8" stroke-width="1.2"/><path d="M442,701.3 V718" stroke="#222" stroke-width="1.2"/><rect x="243" y="709.5" width="13" height="25.5" fill="#fff" stroke="#2a2ab8" stroke-width="1.6"/><path d="M249.5,711 L249.5,713 L252,714.5 L247,716.5 L252,718.5 L247,720.5 L249.5,722" fill="none" stroke="#2a2ab8" stroke-width="1"/><circle cx="249.5" cy="728" r="4.5" fill="#fff" stroke="#2a2ab8" stroke-width="1"/><path d="M247,728 q1.2,-2 2.5,0 t2.5,0" fill="none" stroke="#2a2ab8" stroke-width="0.9"/><path d="M301.6,681.7 L320.6,691.5 L301.6,701.7 Z" fill="#cfe4f8" stroke="#222" stroke-width="1.3"/><rect x="363.2" y="680.5" width="22" height="22.5" fill="#fff" stroke="#2a2ab8" stroke-width="1.8"/><path d="M367.2,686 q3.5,-4 7,0 t7,0" stroke="#ff2020" fill="none" stroke-width="1.3"/><path d="M367.2,691.5 q3.5,-3.5 7,0 t7,0" stroke="#222" fill="none" stroke-width="1.3"/><path d="M367.2,697 q3.5,-4 7,0 t7,0" stroke="#ff2020" fill="none" stroke-width="1.3"/><path d="M362.2,689 L365.2,691.3 L362.2,693.5 Z" fill="#111"/><rect x="499.5" y="680.5" width="22" height="22.5" fill="#fff" stroke="#2a2ab8" stroke-width="1.8"/><path d="M503.5,686 q3.5,-4 7,0 t7,0" stroke="#ff2020" fill="none" stroke-width="1.3"/><path d="M503.5,691.5 q3.5,-3.5 7,0 t7,0" stroke="#222" fill="none" stroke-width="1.3"/><path d="M503.5,697 q3.5,-4 7,0 t7,0" stroke="#ff2020" fill="none" stroke-width="1.3"/><path d="M498.5,689 L501.5,691.3 L498.5,693.5 Z" fill="#111"/><rect x="636.5" y="680.5" width="22" height="22.5" fill="#fff" stroke="#2a2ab8" stroke-width="1.8"/><path d="M640.5,686 q3.5,-4 7,0 t7,0" stroke="#ff2020" fill="none" stroke-width="1.3"/><path d="M640.5,691.5 q3.5,-3.5 7,0 t7,0" stroke="#222" fill="none" stroke-width="1.3"/><path d="M640.5,697 q3.5,-4 7,0 t7,0" stroke="#ff2020" fill="none" stroke-width="1.3"/><path d="M635.5,689 L638.5,691.3 L635.5,693.5 Z" fill="#111"/><circle cx="442" cy="691.3" r="9.8" fill="#fff" stroke="#2a2ab8" stroke-width="1.8"/><path d="M435,684.3 L449,698.3 M449,684.3 L435,698.3" stroke="#2a2ab8" stroke-width="1.4"/><path d="M439,684 H445" stroke="#ff2020" stroke-width="1.6"/><circle cx="400.5" cy="741" r="8.8" fill="#d8e8f8" stroke="#333" stroke-width="1.3"/><path d="M395,741 q2.7,-5 5.5,0 t5.5,0" fill="none" stroke="#333" stroke-width="1.1"/><path d="M568,681.3 L588,691.5 L568,701.9 Z" fill="#fff" stroke="#2a2ab8" stroke-width="1.7"/><path d="M572,691.5 H578" stroke="#ff2020" stroke-width="2"/><path d="M698.7,681.3 L718.7,691.5 L698.7,701.9 Z" fill="#fff" stroke="#2a2ab8" stroke-width="1.7"/><path d="M702.7,691.5 H708.7" stroke="#ff2020" stroke-width="2"/><rect x="739.5" y="709.3" width="13" height="25.4" fill="#fff" stroke="#2a2ab8" stroke-width="1.6"/><path d="M746,710 L746,713 L748.5,714.5 L743.5,716.5 L748.5,718.5 L743.5,720.5 L748.5,722.5 L746,724 V730 M742,730 H750 M743.5,732 H748.5" fill="none" stroke="#2a2ab8" stroke-width="1"/><line x1="243" y1="738.8" x2="256" y2="738.8" stroke="#1a1a90" stroke-width="1.6" stroke-dasharray="2.4 0.5 1.4 0.6 3 0.7" opacity="0.72"/><line x1="239" y1="742.7" x2="260" y2="742.7" stroke="#1a1a90" stroke-width="1.6" stroke-dasharray="2.4 0.5 1.4 0.6 3 0.7" opacity="0.72"/><line x1="238" y1="746.8" x2="260" y2="746.8" stroke="#1a1a90" stroke-width="1.6" stroke-dasharray="2.4 0.5 1.4 0.6 3 0.7" opacity="0.72"/><line x1="243" y1="751.8" x2="256" y2="751.8" stroke="#1a1a90" stroke-width="1.6" stroke-dasharray="2.4 0.5 1.4 0.6 3 0.7" opacity="0.72"/><line x1="305" y1="704.4" x2="318" y2="704.4" stroke="#1a1a90" stroke-width="1.6" stroke-dasharray="2.4 0.5 1.4 0.6 3 0.7" opacity="0.72"/><line x1="304" y1="709" x2="318" y2="709" stroke="#1a1a90" stroke-width="1.6" stroke-dasharray="2.4 0.5 1.4 0.6 3 0.7" opacity="0.72"/><line x1="304" y1="713.5" x2="318" y2="713.5" stroke="#1a1a90" stroke-width="1.6" stroke-dasharray="2.4 0.5 1.4 0.6 3 0.7" opacity="0.72"/><line x1="367" y1="708" x2="378" y2="708" stroke="#1a1a90" stroke-width="1.6" stroke-dasharray="2.4 0.5 1.4 0.6 3 0.7" opacity="0.72"/><line x1="354" y1="713" x2="392" y2="713" stroke="#1a1a90" stroke-width="1.6" stroke-dasharray="2.4 0.5 1.4 0.6 3 0.7" opacity="0.72"/><line x1="360" y1="717" x2="390" y2="717" stroke="#1a1a90" stroke-width="1.6" stroke-dasharray="2.4 0.5 1.4 0.6 3 0.7" opacity="0.72"/><line x1="356" y1="721" x2="390" y2="721" stroke="#1a1a90" stroke-width="1.6" stroke-dasharray="2.4 0.5 1.4 0.6 3 0.7" opacity="0.72"/><line x1="358" y1="726" x2="388" y2="726" stroke="#1a1a90" stroke-width="1.6" stroke-dasharray="2.4 0.5 1.4 0.6 3 0.7" opacity="0.72"/><line x1="461" y1="705.2" x2="472" y2="705.2" stroke="#1a1a90" stroke-width="1.6" stroke-dasharray="2.4 0.5 1.4 0.6 3 0.7" opacity="0.72"/><line x1="449" y1="709.5" x2="485" y2="709.5" stroke="#1a1a90" stroke-width="1.6" stroke-dasharray="2.4 0.5 1.4 0.6 3 0.7" opacity="0.72"/><line x1="451" y1="713.5" x2="484" y2="713.5" stroke="#1a1a90" stroke-width="1.6" stroke-dasharray="2.4 0.5 1.4 0.6 3 0.7" opacity="0.72"/><line x1="451" y1="717.7" x2="484" y2="717.7" stroke="#1a1a90" stroke-width="1.6" stroke-dasharray="2.4 0.5 1.4 0.6 3 0.7" opacity="0.72"/><line x1="451" y1="721.7" x2="484" y2="721.7" stroke="#1a1a90" stroke-width="1.6" stroke-dasharray="2.4 0.5 1.4 0.6 3 0.7" opacity="0.72"/><line x1="451" y1="726" x2="484" y2="726" stroke="#1a1a90" stroke-width="1.6" stroke-dasharray="2.4 0.5 1.4 0.6 3 0.7" opacity="0.72"/><line x1="451" y1="730.3" x2="484" y2="730.3" stroke="#1a1a90" stroke-width="1.6" stroke-dasharray="2.4 0.5 1.4 0.6 3 0.7" opacity="0.72"/><line x1="451" y1="734.3" x2="484" y2="734.3" stroke="#1a1a90" stroke-width="1.6" stroke-dasharray="2.4 0.5 1.4 0.6 3 0.7" opacity="0.72"/><line x1="453" y1="739.5" x2="481" y2="739.5" stroke="#1a1a90" stroke-width="1.6" stroke-dasharray="2.4 0.5 1.4 0.6 3 0.7" opacity="0.72"/><line x1="456" y1="743.7" x2="478" y2="743.7" stroke="#1a1a90" stroke-width="1.6" stroke-dasharray="2.4 0.5 1.4 0.6 3 0.7" opacity="0.72"/><line x1="445" y1="747.8" x2="491" y2="747.8" stroke="#1a1a90" stroke-width="1.6" stroke-dasharray="2.4 0.5 1.4 0.6 3 0.7" opacity="0.72"/><line x1="450" y1="752" x2="485" y2="752" stroke="#1a1a90" stroke-width="1.6" stroke-dasharray="2.4 0.5 1.4 0.6 3 0.7" opacity="0.72"/><line x1="452" y1="756.2" x2="480" y2="756.2" stroke="#1a1a90" stroke-width="1.6" stroke-dasharray="2.4 0.5 1.4 0.6 3 0.7" opacity="0.72"/><line x1="446" y1="760.5" x2="487" y2="760.5" stroke="#1a1a90" stroke-width="1.6" stroke-dasharray="2.4 0.5 1.4 0.6 3 0.7" opacity="0.72"/><line x1="388" y1="753" x2="420" y2="753" stroke="#1a1a90" stroke-width="1.6" stroke-dasharray="2.4 0.5 1.4 0.6 3 0.7" opacity="0.72"/><line x1="394" y1="757" x2="413" y2="757" stroke="#1a1a90" stroke-width="1.6" stroke-dasharray="2.4 0.5 1.4 0.6 3 0.7" opacity="0.72"/><line x1="396" y1="761" x2="413" y2="761" stroke="#1a1a90" stroke-width="1.6" stroke-dasharray="2.4 0.5 1.4 0.6 3 0.7" opacity="0.72"/><line x1="506" y1="708.5" x2="515" y2="708.5" stroke="#1a1a90" stroke-width="1.6" stroke-dasharray="2.4 0.5 1.4 0.6 3 0.7" opacity="0.72"/><line x1="492" y1="713" x2="525" y2="713" stroke="#1a1a90" stroke-width="1.6" stroke-dasharray="2.4 0.5 1.4 0.6 3 0.7" opacity="0.72"/><line x1="495" y1="717.5" x2="525" y2="717.5" stroke="#1a1a90" stroke-width="1.6" stroke-dasharray="2.4 0.5 1.4 0.6 3 0.7" opacity="0.72"/><line x1="495" y1="722" x2="525" y2="722" stroke="#1a1a90" stroke-width="1.6" stroke-dasharray="2.4 0.5 1.4 0.6 3 0.7" opacity="0.72"/><line x1="496" y1="726.5" x2="524" y2="726.5" stroke="#1a1a90" stroke-width="1.6" stroke-dasharray="2.4 0.5 1.4 0.6 3 0.7" opacity="0.72"/><line x1="575" y1="705.3" x2="583" y2="705.3" stroke="#1a1a90" stroke-width="1.6" stroke-dasharray="2.4 0.5 1.4 0.6 3 0.7" opacity="0.72"/><line x1="562" y1="709.6" x2="596" y2="709.6" stroke="#1a1a90" stroke-width="1.6" stroke-dasharray="2.4 0.5 1.4 0.6 3 0.7" opacity="0.72"/><line x1="564" y1="713.6" x2="596" y2="713.6" stroke="#1a1a90" stroke-width="1.6" stroke-dasharray="2.4 0.5 1.4 0.6 3 0.7" opacity="0.72"/><line x1="566" y1="717.6" x2="594" y2="717.6" stroke="#1a1a90" stroke-width="1.6" stroke-dasharray="2.4 0.5 1.4 0.6 3 0.7" opacity="0.72"/><line x1="564" y1="722.4" x2="596" y2="722.4" stroke="#1a1a90" stroke-width="1.6" stroke-dasharray="2.4 0.5 1.4 0.6 3 0.7" opacity="0.72"/><line x1="562" y1="727" x2="596" y2="727" stroke="#1a1a90" stroke-width="1.6" stroke-dasharray="2.4 0.5 1.4 0.6 3 0.7" opacity="0.72"/><line x1="564" y1="731.3" x2="594" y2="731.3" stroke="#1a1a90" stroke-width="1.6" stroke-dasharray="2.4 0.5 1.4 0.6 3 0.7" opacity="0.72"/><line x1="562" y1="735.5" x2="596" y2="735.5" stroke="#1a1a90" stroke-width="1.6" stroke-dasharray="2.4 0.5 1.4 0.6 3 0.7" opacity="0.72"/><line x1="642" y1="708.5" x2="651" y2="708.5" stroke="#1a1a90" stroke-width="1.6" stroke-dasharray="2.4 0.5 1.4 0.6 3 0.7" opacity="0.72"/><line x1="630" y1="713" x2="663" y2="713" stroke="#1a1a90" stroke-width="1.6" stroke-dasharray="2.4 0.5 1.4 0.6 3 0.7" opacity="0.72"/><line x1="632" y1="717.5" x2="663" y2="717.5" stroke="#1a1a90" stroke-width="1.6" stroke-dasharray="2.4 0.5 1.4 0.6 3 0.7" opacity="0.72"/><line x1="632" y1="722" x2="663" y2="722" stroke="#1a1a90" stroke-width="1.6" stroke-dasharray="2.4 0.5 1.4 0.6 3 0.7" opacity="0.72"/><line x1="634" y1="726.5" x2="662" y2="726.5" stroke="#1a1a90" stroke-width="1.6" stroke-dasharray="2.4 0.5 1.4 0.6 3 0.7" opacity="0.72"/><line x1="705" y1="705.3" x2="714" y2="705.3" stroke="#1a1a90" stroke-width="1.6" stroke-dasharray="2.4 0.5 1.4 0.6 3 0.7" opacity="0.72"/><line x1="693" y1="709.6" x2="726" y2="709.6" stroke="#1a1a90" stroke-width="1.6" stroke-dasharray="2.4 0.5 1.4 0.6 3 0.7" opacity="0.72"/><line x1="695" y1="713.6" x2="726" y2="713.6" stroke="#1a1a90" stroke-width="1.6" stroke-dasharray="2.4 0.5 1.4 0.6 3 0.7" opacity="0.72"/><line x1="697" y1="717.6" x2="724" y2="717.6" stroke="#1a1a90" stroke-width="1.6" stroke-dasharray="2.4 0.5 1.4 0.6 3 0.7" opacity="0.72"/><line x1="695" y1="722.4" x2="726" y2="722.4" stroke="#1a1a90" stroke-width="1.6" stroke-dasharray="2.4 0.5 1.4 0.6 3 0.7" opacity="0.72"/><line x1="693" y1="727" x2="726" y2="727" stroke="#1a1a90" stroke-width="1.6" stroke-dasharray="2.4 0.5 1.4 0.6 3 0.7" opacity="0.72"/><line x1="695" y1="731.3" x2="724" y2="731.3" stroke="#1a1a90" stroke-width="1.6" stroke-dasharray="2.4 0.5 1.4 0.6 3 0.7" opacity="0.72"/><line x1="693" y1="735.5" x2="726" y2="735.5" stroke="#1a1a90" stroke-width="1.6" stroke-dasharray="2.4 0.5 1.4 0.6 3 0.7" opacity="0.72"/><line x1="740" y1="738.7" x2="752" y2="738.7" stroke="#1a1a90" stroke-width="1.6" stroke-dasharray="2.4 0.5 1.4 0.6 3 0.7" opacity="0.72"/><line x1="738" y1="742.7" x2="754" y2="742.7" stroke="#1a1a90" stroke-width="1.6" stroke-dasharray="2.4 0.5 1.4 0.6 3 0.7" opacity="0.72"/></svg>
<div style="position:absolute;left:212px;top:96px;width:585px;height:452.5px;background:linear-gradient(#98b6d8 0px,#a9c4e2 20px,#b9d1ea 32px,#b9d1ea 100%);border:1px solid #3a3a3a;border-left-color:#3a3a3a;border-radius:6px 6px 0 0;box-shadow:inset 1px 1px 0 rgba(255,255,255,0.6), inset -1px -1px 0 #4fc8e8;overflow:hidden;"></div><div style="position:absolute;left:682.5px;top:105.5px;width:33px;height:19px;border:1px solid #7a8ca6;border-radius:3px;background:linear-gradient(#c2d6ec 0%,#b4cae4 48%,#98b4d4 52%,#a8c2de 100%);"></div><div style="position:absolute;left:693.5px;top:114.5px;width:11px;height:5px;background:#fff;border:1px solid #44505e;border-radius:1.5px;"></div><div style="position:absolute;left:718.0px;top:105.5px;width:33px;height:19px;border:1px solid #7a8ca6;border-radius:3px;background:linear-gradient(#c2d6ec 0%,#b4cae4 48%,#98b4d4 52%,#a8c2de 100%);"></div><div style="position:absolute;left:729.0px;top:109.5px;width:11px;height:9px;background:#fff;border:1px solid #44505e;border-radius:1.5px;"><div style="position:absolute;left:2px;top:2px;width:5px;height:3px;background:#5a7090;"></div></div><div style="position:absolute;left:753.5px;top:105.5px;width:33px;height:19px;border:1px solid #6d3a3e;border-radius:3px;background:linear-gradient(#e8a392 0%,#dc8a78 45%,#c24a30 50%,#c8553a 75%,#d88670 100%);"></div><svg style="left:762.0px;top:108.5px" width="16" height="13" viewBox="0 0 16 13"><path d="M4 2.5 L12 10 M12 2.5 L4 10" stroke="#55606e" stroke-width="4" stroke-linecap="round"/><path d="M4 2.5 L12 10 M12 2.5 L4 10" stroke="#fff" stroke-width="2.2" stroke-linecap="round"/></svg><svg style="left:222px;top:106px" width="17" height="17" viewBox="0 0 17 17"><rect x="1.5" y="1.5" width="13" height="12" fill="#fff" stroke="#505050" stroke-width="1"/><path d="M5.5 2 V13 M9.5 2 V13 M2 5.5 H14 M2 9.5 H14" stroke="#d8d8d8" stroke-width="0.8"/><path d="M2 11 L6 7 L9 9 L14 4" stroke="#e01010" stroke-width="1.8" fill="none"/><path d="M5 16 H11" stroke="#909090" stroke-width="0.8" stroke-dasharray="1 1"/></svg><div style="position:absolute;left:242.5px;top:106.33px;font-size:12.92px;line-height:19.38px;color:#1a1a2a;white-space:nowrap;transform:scaleX(0.929);transform-origin:0 0;">Spectrum (Workspace: RFSE_upconverter)</div><div style="position:absolute;left:221px;top:127.5px;width:567px;height:412px;background:#c0c0c0;border-top:1px solid #6a6a6a;border-left:1px solid #6a6a6a;border-right:1px solid #fdfdfd;border-bottom:1px solid #fdfdfd;overflow:hidden;"></div>
<svg style="left:0px;top:0px" width="1600" height="900" viewBox="0 0 1600 900" shape-rendering="auto"><defs><clipPath id="spc"><rect x="222" y="129" width="564" height="409"/></clipPath></defs><g clip-path="url(#spc)"><rect x="297" y="164" width="474" height="314" fill="#000"/><line x1="297" y1="175.2" x2="771" y2="175.2" stroke="#3a063a" stroke-width="1.2"/><line x1="297" y1="197.6" x2="771" y2="197.6" stroke="#3a063a" stroke-width="1.2"/><line x1="297" y1="220.1" x2="771" y2="220.1" stroke="#3a063a" stroke-width="1.2"/><line x1="297" y1="242.5" x2="771" y2="242.5" stroke="#3a063a" stroke-width="1.2"/><line x1="297" y1="264.9" x2="771" y2="264.9" stroke="#3a063a" stroke-width="1.2"/><line x1="297" y1="287.4" x2="771" y2="287.4" stroke="#3a063a" stroke-width="1.2"/><line x1="297" y1="309.8" x2="771" y2="309.8" stroke="#3a063a" stroke-width="1.2"/><line x1="297" y1="332.2" x2="771" y2="332.2" stroke="#3a063a" stroke-width="1.2"/><line x1="297" y1="354.6" x2="771" y2="354.6" stroke="#3a063a" stroke-width="1.2"/><line x1="297" y1="377.1" x2="771" y2="377.1" stroke="#3a063a" stroke-width="1.2"/><line x1="297" y1="399.5" x2="771" y2="399.5" stroke="#3a063a" stroke-width="1.2"/><line x1="297" y1="421.9" x2="771" y2="421.9" stroke="#3a063a" stroke-width="1.2"/><line x1="297" y1="444.4" x2="771" y2="444.4" stroke="#3a063a" stroke-width="1.2"/><line x1="297" y1="466.8" x2="771" y2="466.8" stroke="#3a063a" stroke-width="1.2"/><line x1="291" y1="164.0" x2="771" y2="164.0" stroke="#8c8c8c" stroke-width="1.3"/><line x1="291" y1="186.4" x2="771" y2="186.4" stroke="#8c8c8c" stroke-width="1.3"/><line x1="291" y1="208.9" x2="771" y2="208.9" stroke="#8c8c8c" stroke-width="1.3"/><line x1="291" y1="231.3" x2="771" y2="231.3" stroke="#8c8c8c" stroke-width="1.3"/><line x1="291" y1="253.7" x2="771" y2="253.7" stroke="#8c8c8c" stroke-width="1.3"/><line x1="291" y1="276.1" x2="771" y2="276.1" stroke="#8c8c8c" stroke-width="1.3"/><line x1="291" y1="298.6" x2="771" y2="298.6" stroke="#8c8c8c" stroke-width="1.3"/><line x1="291" y1="321.0" x2="771" y2="321.0" stroke="#8c8c8c" stroke-width="1.3"/><line x1="291" y1="343.4" x2="771" y2="343.4" stroke="#8c8c8c" stroke-width="1.3"/><line x1="291" y1="365.9" x2="771" y2="365.9" stroke="#8c8c8c" stroke-width="1.3"/><line x1="291" y1="388.3" x2="771" y2="388.3" stroke="#8c8c8c" stroke-width="1.3"/><line x1="291" y1="410.7" x2="771" y2="410.7" stroke="#8c8c8c" stroke-width="1.3"/><line x1="291" y1="433.1" x2="771" y2="433.1" stroke="#8c8c8c" stroke-width="1.3"/><line x1="291" y1="455.6" x2="771" y2="455.6" stroke="#8c8c8c" stroke-width="1.3"/><line x1="291" y1="478.0" x2="771" y2="478.0" stroke="#8c8c8c" stroke-width="1.3"/><line x1="297.0" y1="164" x2="297.0" y2="484" stroke="#8c8c8c" stroke-width="1.3"/><line x1="330.9" y1="164" x2="330.9" y2="478" stroke="#8c8c8c" stroke-width="1.3"/><line x1="364.7" y1="164" x2="364.7" y2="484" stroke="#8c8c8c" stroke-width="1.3"/><line x1="398.6" y1="164" x2="398.6" y2="478" stroke="#8c8c8c" stroke-width="1.3"/><line x1="432.4" y1="164" x2="432.4" y2="484" stroke="#8c8c8c" stroke-width="1.3"/><line x1="466.3" y1="164" x2="466.3" y2="478" stroke="#8c8c8c" stroke-width="1.3"/><line x1="500.1" y1="164" x2="500.1" y2="484" stroke="#8c8c8c" stroke-width="1.3"/><line x1="534.0" y1="164" x2="534.0" y2="478" stroke="#8c8c8c" stroke-width="1.3"/><line x1="567.9" y1="164" x2="567.9" y2="484" stroke="#8c8c8c" stroke-width="1.3"/><line x1="601.7" y1="164" x2="601.7" y2="478" stroke="#8c8c8c" stroke-width="1.3"/><line x1="635.6" y1="164" x2="635.6" y2="484" stroke="#8c8c8c" stroke-width="1.3"/><line x1="669.4" y1="164" x2="669.4" y2="478" stroke="#8c8c8c" stroke-width="1.3"/><line x1="703.3" y1="164" x2="703.3" y2="484" stroke="#8c8c8c" stroke-width="1.3"/><line x1="737.1" y1="164" x2="737.1" y2="478" stroke="#8c8c8c" stroke-width="1.3"/><line x1="771.0" y1="164" x2="771.0" y2="484" stroke="#8c8c8c" stroke-width="1.3"/><line x1="703.3" y1="332.2" x2="703.3" y2="478.0" stroke="#a84848" stroke-width="2.4"/><line x1="448.7" y1="460.1" x2="448.7" y2="478.0" stroke="#3a0090" stroke-width="2.6"/><line x1="478.5" y1="471.3" x2="478.5" y2="478.0" stroke="#9050b0" stroke-width="2.6"/><line x1="539.4" y1="439.9" x2="539.4" y2="478.0" stroke="#a050b8" stroke-width="2.6"/><path d="M297.0,410.7 L310.5,410.3 L330.9,409.4 L364.7,408.5 L398.6,408.3 L421.6,408.7 L423.9,408.3 L425.7,402.9 L427.0,390.5 L429.0,370.3 L430.4,353.5 L431.8,347.9 L435.8,347.9 L437.0,351.3 L438.5,367.2 L440.6,378.0 L441.6,380.4 L443.9,392.8 L446.0,404.0 L449.0,408.3 L466.3,409.6 L500.1,409.8 L534.0,409.8 L551.6,408.9 L555.7,406.2 L559.1,397.3 L561.8,381.6 L564.5,373.7 L566.5,373.7 L567.9,352.4 L569.9,365.9 L571.9,360.3 L574.6,376.0 L577.3,378.2 L579.4,365.9 L581.4,370.3 L583.4,397.3 L586.8,408.5 L594.9,409.8 L635.6,409.4 L669.4,408.9 L703.3,408.9 L710.1,409.1 L714.1,411.8 L717.5,408.9 L720.9,409.8 L721.6,478.0" fill="none" stroke="#80ad5a" stroke-width="3.1" stroke-linejoin="round"/><line x1="297.0" y1="410.7" x2="297.0" y2="478.0" stroke="#d05040" stroke-width="3.2"/><line x1="432.4" y1="188.7" x2="432.4" y2="262.5" stroke="#a060a8" stroke-width="3.6"/><line x1="432.4" y1="262.5" x2="432.4" y2="334.4" stroke="#4aa828" stroke-width="3.6"/><line x1="432.4" y1="334.4" x2="432.4" y2="343.3" stroke="#ff4838" stroke-width="3.6"/><line x1="432.4" y1="343.3" x2="432.4" y2="478" stroke="#7c3a34" stroke-width="3.6"/><line x1="567.9" y1="349.6" x2="567.9" y2="417.1" stroke="#74b050" stroke-width="3.2"/><line x1="567.9" y1="417.1" x2="567.9" y2="459.8" stroke="#f8a060" stroke-width="3.2"/><line x1="567.9" y1="459.8" x2="567.9" y2="478" stroke="#b87068" stroke-width="3.2"/><path d="M432.5,194 L490,205 L490,219 Z" fill="#b4ffb4"/><rect x="489" y="176.5" width="273" height="155.5" rx="13" ry="13" fill="#b4ffb4"/></g></svg><div style="position:absolute;left:-115.5px;width:400px;top:154.6px;font-size:16.4px;line-height:16.4px;color:#ff1a1a;white-space:nowrap;text-align:right;-webkit-text-stroke:0.35px #ff1a1a;">20</div><div style="position:absolute;left:-115.5px;width:400px;top:177.0px;font-size:16.4px;line-height:16.4px;color:#ff1a1a;white-space:nowrap;text-align:right;-webkit-text-stroke:0.35px #ff1a1a;">10</div><div style="position:absolute;left:-115.5px;width:400px;top:199.5px;font-size:16.4px;line-height:16.4px;color:#ff1a1a;white-space:nowrap;text-align:right;-webkit-text-stroke:0.35px #ff1a1a;">0</div><div style="position:absolute;left:-115.5px;width:400px;top:221.9px;font-size:16.4px;line-height:16.4px;color:#ff1a1a;white-space:nowrap;text-align:right;-webkit-text-stroke:0.35px #ff1a1a;">-10</div><div style="position:absolute;left:-115.5px;width:400px;top:244.3px;font-size:16.4px;line-height:16.4px;color:#ff1a1a;white-space:nowrap;text-align:right;-webkit-text-stroke:0.35px #ff1a1a;">-20</div><div style="position:absolute;left:-115.5px;width:400px;top:266.8px;font-size:16.4px;line-height:16.4px;color:#ff1a1a;white-space:nowrap;text-align:right;-webkit-text-stroke:0.35px #ff1a1a;">-30</div><div style="position:absolute;left:-115.5px;width:400px;top:289.2px;font-size:16.4px;line-height:16.4px;color:#ff1a1a;white-space:nowrap;text-align:right;-webkit-text-stroke:0.35px #ff1a1a;">-40</div><div style="position:absolute;left:-115.5px;width:400px;top:311.6px;font-size:16.4px;line-height:16.4px;color:#ff1a1a;white-space:nowrap;text-align:right;-webkit-text-stroke:0.35px #ff1a1a;">-50</div><div style="position:absolute;left:-115.5px;width:400px;top:334.0px;font-size:16.4px;line-height:16.4px;color:#ff1a1a;white-space:nowrap;text-align:right;-webkit-text-stroke:0.35px #ff1a1a;">-60</div><div style="position:absolute;left:-115.5px;width:400px;top:356.5px;font-size:16.4px;line-height:16.4px;color:#ff1a1a;white-space:nowrap;text-align:right;-webkit-text-stroke:0.35px #ff1a1a;">-70</div><div style="position:absolute;left:-115.5px;width:400px;top:378.9px;font-size:16.4px;line-height:16.4px;color:#ff1a1a;white-space:nowrap;text-align:right;-webkit-text-stroke:0.35px #ff1a1a;">-80</div><div style="position:absolute;left:-115.5px;width:400px;top:401.3px;font-size:16.4px;line-height:16.4px;color:#ff1a1a;white-space:nowrap;text-align:right;-webkit-text-stroke:0.35px #ff1a1a;">-90</div><div style="position:absolute;left:-115.5px;width:400px;top:423.8px;font-size:16.4px;line-height:16.4px;color:#ff1a1a;white-space:nowrap;text-align:right;-webkit-text-stroke:0.35px #ff1a1a;">-100</div><div style="position:absolute;left:-115.5px;width:400px;top:446.2px;font-size:16.4px;line-height:16.4px;color:#ff1a1a;white-space:nowrap;text-align:right;-webkit-text-stroke:0.35px #ff1a1a;">-110</div><div style="position:absolute;left:-115.5px;width:400px;top:468.6px;font-size:16.4px;line-height:16.4px;color:#ff1a1a;white-space:nowrap;text-align:right;-webkit-text-stroke:0.35px #ff1a1a;">-120</div><div style="position:absolute;left:97.0px;width:400px;top:490.4px;font-size:16.4px;line-height:16.4px;color:#111;white-space:nowrap;text-align:center;-webkit-text-stroke:0.3px #111;">0</div><div style="position:absolute;left:164.71500000000003px;width:400px;top:490.4px;font-size:16.4px;line-height:16.4px;color:#111;white-space:nowrap;text-align:center;-webkit-text-stroke:0.3px #111;">5</div><div style="position:absolute;left:232.43px;width:400px;top:490.4px;font-size:16.4px;line-height:16.4px;color:#111;white-space:nowrap;text-align:center;-webkit-text-stroke:0.3px #111;">10</div><div style="position:absolute;left:300.145px;width:400px;top:490.4px;font-size:16.4px;line-height:16.4px;color:#111;white-space:nowrap;text-align:center;-webkit-text-stroke:0.3px #111;">15</div><div style="position:absolute;left:367.86px;width:400px;top:490.4px;font-size:16.4px;line-height:16.4px;color:#111;white-space:nowrap;text-align:center;-webkit-text-stroke:0.3px #111;">20</div><div style="position:absolute;left:435.57500000000005px;width:400px;top:490.4px;font-size:16.4px;line-height:16.4px;color:#111;white-space:nowrap;text-align:center;-webkit-text-stroke:0.3px #111;">25</div><div style="position:absolute;left:503.28999999999996px;width:400px;top:490.4px;font-size:16.4px;line-height:16.4px;color:#111;white-space:nowrap;text-align:center;-webkit-text-stroke:0.3px #111;">30</div><div style="position:absolute;left:571.005px;width:400px;top:490.4px;font-size:16.4px;line-height:16.4px;color:#111;white-space:nowrap;text-align:center;-webkit-text-stroke:0.3px #111;">35</div><div style="position:absolute;left:304.5px;width:400px;top:514.0px;font-size:16.8px;line-height:16.8px;color:#111;white-space:nowrap;text-align:center;-webkit-text-stroke:0.25px #111;">Frequency (GHz)</div><div style="position:absolute;left:188px;top:325px;width:100px;height:20px;font-size:16.4px;line-height:20px;color:#ff1a1a;text-align:center;transform:rotate(-90deg);white-space:nowrap;-webkit-text-stroke:0.3px #ff1a1a;">P2 (dBm)</div><div style="position:absolute;left:495px;top:182px;font-size:15.35px;line-height:17.9px;color:#1a1a1a;white-space:nowrap;-webkit-text-stroke:0.2px #1a1a1a;">P2: 10 GHz, 9.069 dBm<br>Node Total from 'Amp2'<br>&nbsp;<br>P2: 10 GHz, 9.067 dBm<br>{7}D<br>[Source1+Osc1],Source1,IF_AMP1,I<br>F_BPF1,Mixer1,BPF1,Amp1,BPF2,A<br>mp2</div>
</div>
<div style="position:absolute;left:1347px;top:93px;width:253px;height:767px;background:#f0f0f0;"></div>
<div style="position:absolute;left:1345px;top:93px;width:6px;height:767px;background:#f0f0f0;border-right:1px solid #e0e0e0;"></div><div style="position:absolute;left:1351px;top:93.5px;width:249px;height:19px;background:#bdbdbd;border:1px solid #adadad;border-top-color:#a8a8a8;"></div><div style="position:absolute;left:1355px;top:94.98px;font-size:11.87px;line-height:17.81px;color:#f8f8f8;white-space:nowrap;transform:scaleX(0.977);transform-origin:0 0;">Part Selector A</div><svg style="left:1548px;top:99.5px" width="12" height="8" viewBox="0 0 12 8"><path d="M1 1 H11 L6 7 Z" fill="#fff"/></svg><svg style="left:1567px;top:97.5px" width="12" height="12" viewBox="0 0 12 12"><path d="M4 1.5 H8.5 M4.5 1.5 V6.5 M8 1.5 V6.5 M3 6.5 H9.5 M6.2 6.5 V10.5" stroke="#fff" stroke-width="1.2" fill="none"/></svg><svg style="left:1584px;top:97.5px" width="12" height="12" viewBox="0 0 12 12"><path d="M1.5 1.5 L10.5 10.5 M10.5 1.5 L1.5 10.5" stroke="#fff" stroke-width="1.4"/></svg><div style="position:absolute;left:1352px;top:115px;width:246px;height:719px;background:#f0f0f0;border-left:1px solid #dadada;border-top:1px solid #fff;border-right:1px solid #dadada;"></div><div style="position:absolute;left:1355px;top:120.67px;font-size:12.43px;line-height:18.65px;color:#111;white-space:nowrap;transform:scaleX(0.901);transform-origin:0 0;">Current Library:</div><div style="position:absolute;left:1355px;top:138px;width:241px;height:21.5px;background:#e5e5e5;border:1px solid #adadad;"></div><div style="position:absolute;left:1360px;top:139.87px;font-size:12.43px;line-height:18.65px;color:#111;white-space:nowrap;transform:scaleX(0.917);transform-origin:0 0;">RF System</div><svg style="left:1580px;top:144px" width="12" height="8" viewBox="0 0 12 8"><path d="M1.5 1.5 L6 6 L10.5 1.5" fill="none" stroke="#333" stroke-width="1.1"/></svg><div style="position:absolute;left:1355px;top:159.87px;font-size:12.43px;line-height:18.65px;color:#111;white-space:nowrap;transform:scaleX(0.901);transform-origin:0 0;">Category:</div><div style="position:absolute;left:1355px;top:177.5px;width:241px;height:21.5px;background:#e5e5e5;border:1px solid #adadad;"></div><div style="position:absolute;left:1360px;top:179.37px;font-size:12.43px;line-height:18.65px;color:#111;white-space:nowrap;transform:scaleX(0.917);transform-origin:0 0;">&lt;All&gt;</div><svg style="left:1580px;top:184px" width="12" height="8" viewBox="0 0 12 8"><path d="M1.5 1.5 L6 6 L10.5 1.5" fill="none" stroke="#333" stroke-width="1.1"/></svg><svg style="left:1362px;top:205px" width="18" height="16" viewBox="0 0 18 16"><path d="M1 3 H6 L8 5 H14 V14 H1 Z" fill="#4aa0e0" stroke="#1a5090" stroke-width="0.8"/><path d="M3 8 H17 L14 14 H1 Z" fill="#7cc8f8" stroke="#1a5090" stroke-width="0.8"/><path d="M10 3 Q13 0 16 3" fill="none" stroke="#2040a0" stroke-width="1"/></svg><svg style="left:1388px;top:204px" width="18" height="17" viewBox="0 0 18 17"><g transform="scale(1.0)"><path d="M0.8 8.5 L8 3.2 L17.2 8 L9.6 13.6 Z" fill="#9a22d0" stroke="#2a0840" stroke-width="0.9"/><path d="M0.8 8.5 L0.8 10.8 L9.6 16 L9.6 13.6 Z" fill="#4a0a70" stroke="#2a0840" stroke-width="0.8"/><path d="M9.6 13.6 L17.2 8 L17.2 10.2 L9.6 16 Z" fill="#f4f4f4" stroke="#2a0840" stroke-width="0.8"/><path d="M6.3 4.2 Q6.5 1 9.6 1 Q12.8 1.2 12.6 3.8 Q12.4 5.6 10.2 6.6 L10 8.4" fill="none" stroke="#303010" stroke-width="3.4" stroke-linecap="round"/><path d="M6.3 4.2 Q6.5 1 9.6 1 Q12.8 1.2 12.6 3.8 Q12.4 5.6 10.2 6.6 L10 8.4" fill="none" stroke="#fff030" stroke-width="1.9" stroke-linecap="round"/><circle cx="10" cy="11" r="1.5" fill="#fff030" stroke="#303010" stroke-width="0.7"/></g></svg><div style="position:absolute;left:1355px;top:222.87px;font-size:12.43px;line-height:18.65px;color:#111;white-space:nowrap;transform:scaleX(0.901);transform-origin:0 0;">Filter By:</div><div style="position:absolute;left:1355px;top:241px;width:218px;height:24.5px;background:#fff;border:1px solid #7a7a7a;"></div><div style="position:absolute;left:1577px;top:243.5px;width:16px;height:16px;background:#209a30;"></div><svg style="left:1578px;top:244.5px" width="14" height="14" viewBox="0 0 14 14"><path d="M2 7 H11 M7 3 L11 7 L7 11" fill="none" stroke="#fff" stroke-width="1.8"/></svg><div style="position:absolute;left:1355px;top:270.5px;width:241px;height:451px;background:#fff;border:1px solid #828282;"></div><div style="position:absolute;left:1436px;top:273px;width:1px;height:22px;background:#e5e5e5;"></div><div style="position:absolute;left:1515.5px;top:273px;width:1px;height:22px;background:#e5e5e5;"></div><div style="position:absolute;left:1363px;top:275.87px;font-size:12.43px;line-height:18.65px;color:#111;white-space:nowrap;transform:scaleX(0.901);transform-origin:0 0;">Name</div><div style="position:absolute;left:1442px;top:275.87px;font-size:12.43px;line-height:18.65px;color:#111;white-space:nowrap;transform:scaleX(0.901);transform-origin:0 0;">Description</div><div style="position:absolute;left:1577px;top:272px;width:17px;height:448px;background:#f0f0f0;"></div><div style="position:absolute;left:1578px;top:290px;width:15px;height:242px;background:#cdcdcd;"></div><svg style="left:1579px;top:275px" width="13" height="10" viewBox="0 0 13 10"><path d="M2.5 7 L6.5 3 L10.5 7" fill="none" stroke="#505050" stroke-width="1.4"/></svg><svg style="left:1579px;top:706px" width="13" height="10" viewBox="0 0 13 10"><path d="M2.5 3 L6.5 7 L10.5 3" fill="none" stroke="#505050" stroke-width="1.4"/></svg><svg style="left:1363px;top:299.40000000000003px" width="31" height="13" viewBox="0 0 31 13"><path d="M0 6 H8 M22 6 H30" stroke="#111" stroke-width="1.3"/><path d="M8 0.5 L22 6 L8 11.5 Z" fill="#fff" stroke="#1a1aff" stroke-width="1.2"/><path d="M10 6 H15" stroke="#ff2020" stroke-width="1" stroke-dasharray="1.5 1"/></svg><div style="position:absolute;left:1396.5px;top:297.67px;font-size:12.43px;line-height:18.65px;color:#111;white-space:nowrap;transform:scaleX(0.901);transform-origin:0 0;">Amp...</div><div style="position:absolute;left:1442px;top:297.67px;font-size:12.43px;line-height:18.65px;color:#111;white-space:nowrap;transform:scaleX(0.917);transform-origin:0 0;">Sdata and ...</div><svg style="left:1363px;top:317.12000000000006px" width="31" height="13" viewBox="0 0 31 13"><path d="M0 6 H8 M22 6 H30" stroke="#111" stroke-width="1.3"/><path d="M8 0.5 L22 6 L8 11.5 Z" fill="#cfe4f8" stroke="#222" stroke-width="1.1"/></svg><div style="position:absolute;left:1396.5px;top:315.39px;font-size:12.43px;line-height:18.65px;color:#111;white-space:nowrap;transform:scaleX(0.901);transform-origin:0 0;">Ampl...</div><div style="position:absolute;left:1442px;top:315.39px;font-size:12.43px;line-height:18.65px;color:#111;white-space:nowrap;transform:scaleX(0.917);transform-origin:0 0;">Amplifier</div><svg style="left:1363px;top:334.84000000000003px" width="31" height="13" viewBox="0 0 31 13"><path d="M0 6 H8 M21 6 H30" stroke="#111" stroke-width="1.3"/><rect x="8" y="0" width="13" height="12" fill="#d8ecff" stroke="#222" stroke-width="1"/><path d="M14.5 1 L13 3 L16 5 L13 7 L16 9 L14.5 11" fill="none" stroke="#1a1aff" stroke-width="1"/></svg><div style="position:absolute;left:1396.5px;top:333.11px;font-size:12.43px;line-height:18.65px;color:#111;white-space:nowrap;transform:scaleX(0.901);transform-origin:0 0;">Atte...</div><div style="position:absolute;left:1442px;top:333.11px;font-size:12.43px;line-height:18.65px;color:#111;white-space:nowrap;transform:scaleX(0.917);transform-origin:0 0;">Attenuator</div><svg style="left:1363px;top:352.56px" width="31" height="13" viewBox="0 0 31 13"><path d="M0 6 H8 M21 6 H30" stroke="#111" stroke-width="1.3"/><rect x="8" y="0" width="13" height="12" fill="#e8f4e8" stroke="#222" stroke-width="1"/><path d="M10 3.5 q2 -2 4.5 0 t4.5 0" fill="none" stroke="#20a040" stroke-width="1"/><path d="M10 6.5 q2 -2 4.5 0 t4.5 0" fill="none" stroke="#c02020" stroke-width="1"/><path d="M10 9.5 q2 -2 4.5 0 t4.5 0" fill="none" stroke="#20a040" stroke-width="1"/></svg><div style="position:absolute;left:1396.5px;top:350.83px;font-size:12.43px;line-height:18.65px;color:#111;white-space:nowrap;transform:scaleX(0.901);transform-origin:0 0;">BPF_...</div><div style="position:absolute;left:1442px;top:350.83px;font-size:12.43px;line-height:18.65px;color:#111;white-space:nowrap;transform:scaleX(0.917);transform-origin:0 0;">Bandpass ...</div><svg style="left:1363px;top:370.28000000000003px" width="31" height="13" viewBox="0 0 31 13"><path d="M0 6 H8 M21 6 H30" stroke="#111" stroke-width="1.3"/><rect x="8" y="0" width="13" height="12" fill="#e8f4e8" stroke="#222" stroke-width="1"/><path d="M10 3.5 q2 -2 4.5 0 t4.5 0" fill="none" stroke="#20a040" stroke-width="1"/><path d="M10 6.5 q2 -2 4.5 0 t4.5 0" fill="none" stroke="#c02020" stroke-width="1"/><path d="M10 9.5 q2 -2 4.5 0 t4.5 0" fill="none" stroke="#20a040" stroke-width="1"/></svg><div style="position:absolute;left:1396.5px;top:368.55px;font-size:12.43px;line-height:18.65px;color:#111;white-space:nowrap;transform:scaleX(0.901);transform-origin:0 0;">BPF_...</div><div style="position:absolute;left:1442px;top:368.55px;font-size:12.43px;line-height:18.65px;color:#111;white-space:nowrap;transform:scaleX(0.917);transform-origin:0 0;">Bandpass ...</div><svg style="left:1363px;top:388.00000000000006px" width="31" height="13" viewBox="0 0 31 13"><path d="M0 6 H8 M21 6 H30" stroke="#111" stroke-width="1.3"/><rect x="8" y="0" width="13" height="12" fill="#e8f4e8" stroke="#222" stroke-width="1"/><path d="M10 3.5 q2 -2 4.5 0 t4.5 0" fill="none" stroke="#20a040" stroke-width="1"/><path d="M10 6.5 q2 -2 4.5 0 t4.5 0" fill="none" stroke="#c02020" stroke-width="1"/><path d="M10 9.5 q2 -2 4.5 0 t4.5 0" fill="none" stroke="#20a040" stroke-width="1"/></svg><div style="position:absolute;left:1396.5px;top:386.27px;font-size:12.43px;line-height:18.65px;color:#111;white-space:nowrap;transform:scaleX(0.901);transform-origin:0 0;">BPF_...</div><div style="position:absolute;left:1442px;top:386.27px;font-size:12.43px;line-height:18.65px;color:#111;white-space:nowrap;transform:scaleX(0.917);transform-origin:0 0;">Bandpass ...</div><svg style="left:1363px;top:405.72px" width="31" height="13" viewBox="0 0 31 13"><path d="M0 6 H8 M21 6 H30" stroke="#111" stroke-width="1.3"/><rect x="8" y="0" width="13" height="12" fill="#e8f4e8" stroke="#222" stroke-width="1"/><path d="M10 3.5 q2 -2 4.5 0 t4.5 0" fill="none" stroke="#c02020" stroke-width="1"/><path d="M10 6.5 q2 -2 4.5 0 t4.5 0" fill="none" stroke="#20a040" stroke-width="1"/><path d="M10 9.5 q2 -2 4.5 0 t4.5 0" fill="none" stroke="#c02020" stroke-width="1"/></svg><div style="position:absolute;left:1396.5px;top:403.99px;font-size:12.43px;line-height:18.65px;color:#111;white-space:nowrap;transform:scaleX(0.901);transform-origin:0 0;">BSF_...</div><div style="position:absolute;left:1442px;top:403.99px;font-size:12.43px;line-height:18.65px;color:#111;white-space:nowrap;transform:scaleX(0.917);transform-origin:0 0;">Bandstop ...</div><svg style="left:1363px;top:423.44px" width="31" height="13" viewBox="0 0 31 13"><path d="M0 6 H8 M21 6 H30" stroke="#111" stroke-width="1.3"/><rect x="8" y="0" width="13" height="12" fill="#e8f4e8" stroke="#222" stroke-width="1"/><path d="M10 3.5 q2 -2 4.5 0 t4.5 0" fill="none" stroke="#c02020" stroke-width="1"/><path d="M10 6.5 q2 -2 4.5 0 t4.5 0" fill="none" stroke="#20a040" stroke-width="1"/><path d="M10 9.5 q2 -2 4.5 0 t4.5 0" fill="none" stroke="#c02020" stroke-width="1"/></svg><div style="position:absolute;left:1396.5px;top:421.71px;font-size:12.43px;line-height:18.65px;color:#111;white-space:nowrap;transform:scaleX(0.901);transform-origin:0 0;">BSF_...</div><div style="position:absolute;left:1442px;top:421.71px;font-size:12.43px;line-height:18.65px;color:#111;white-space:nowrap;transform:scaleX(0.917);transform-origin:0 0;">Bandstop ...</div><svg style="left:1363px;top:441.16px" width="31" height="13" viewBox="0 0 31 13"><path d="M0 6 H8 M21 6 H30" stroke="#111" stroke-width="1.3"/><rect x="8" y="0" width="13" height="12" fill="#e8f4e8" stroke="#222" stroke-width="1"/><path d="M10 3.5 q2 -2 4.5 0 t4.5 0" fill="none" stroke="#c02020" stroke-width="1"/><path d="M10 6.5 q2 -2 4.5 0 t4.5 0" fill="none" stroke="#20a040" stroke-width="1"/><path d="M10 9.5 q2 -2 4.5 0 t4.5 0" fill="none" stroke="#c02020" stroke-width="1"/></svg><div style="position:absolute;left:1396.5px;top:439.43px;font-size:12.43px;line-height:18.65px;color:#111;white-space:nowrap;transform:scaleX(0.901);transform-origin:0 0;">BSF_...</div><div style="position:absolute;left:1442px;top:439.43px;font-size:12.43px;line-height:18.65px;color:#111;white-space:nowrap;transform:scaleX(0.917);transform-origin:0 0;">Bandstop ...</div><svg style="left:1363px;top:458.88000000000005px" width="31" height="13" viewBox="0 0 31 13"><path d="M5 6 H25 M15 6 V12" stroke="#111" stroke-width="1.3"/><circle cx="15" cy="5" r="3.5" fill="#d8ecff" stroke="#111" stroke-width="1.3"/></svg><div style="position:absolute;left:1396.5px;top:457.15px;font-size:12.43px;line-height:18.65px;color:#111;white-space:nowrap;transform:scaleX(0.901);transform-origin:0 0;">Circu...</div><div style="position:absolute;left:1442px;top:457.15px;font-size:12.43px;line-height:18.65px;color:#111;white-space:nowrap;transform:scaleX(0.917);transform-origin:0 0;">Circulator</div><svg style="left:1363px;top:476.6px" width="31" height="13" viewBox="0 0 31 13"><path d="M7 3 H25 M9 3 V12 H5 M21 3 V0" stroke="#111" stroke-width="1.1" fill="none"/><rect x="12" y="1" width="7" height="6" fill="#d8ecff" stroke="#111" stroke-width="0.8"/></svg><div style="position:absolute;left:1396.5px;top:474.87px;font-size:12.43px;line-height:18.65px;color:#111;white-space:nowrap;transform:scaleX(0.901);transform-origin:0 0;">Cou...</div><div style="position:absolute;left:1442px;top:474.87px;font-size:12.43px;line-height:18.65px;color:#111;white-space:nowrap;transform:scaleX(0.917);transform-origin:0 0;">Single Dire...</div><svg style="left:1363px;top:494.32px" width="31" height="13" viewBox="0 0 31 13"><path d="M5 2 H25 M5 7 H25 M8 2 V12 H4 M22 2 V12 H26" stroke="#111" stroke-width="1.1" fill="none"/><rect x="9" y="2" width="12" height="5" fill="#d8ecff"/></svg><div style="position:absolute;left:1396.5px;top:492.59px;font-size:12.43px;line-height:18.65px;color:#111;white-space:nowrap;transform:scaleX(0.901);transform-origin:0 0;">Cou...</div><div style="position:absolute;left:1442px;top:492.59px;font-size:12.43px;line-height:18.65px;color:#111;white-space:nowrap;transform:scaleX(0.917);transform-origin:0 0;">Dual Direct...</div><svg style="left:1363px;top:512.04px" width="31" height="13" viewBox="0 0 31 13"><rect x="12.5" y="0.5" width="6" height="11" rx="1" fill="#fff" stroke="#1a1aff" stroke-width="1.4"/><path d="M15.5 2 V10" stroke="#1a1aff" stroke-width="1"/></svg><div style="position:absolute;left:1396.5px;top:510.31px;font-size:12.43px;line-height:18.65px;color:#111;white-space:nowrap;transform:scaleX(0.901);transform-origin:0 0;">CWS...</div><div style="position:absolute;left:1442px;top:510.31px;font-size:12.43px;line-height:18.65px;color:#111;white-space:nowrap;transform:scaleX(0.917);transform-origin:0 0;">Single Ton...</div><svg style="left:1363px;top:529.76px" width="31" height="13" viewBox="0 0 31 13"><path d="M0 6 H9 M21 6 H30" stroke="#111" stroke-width="1.3"/><rect x="9" y="0" width="12" height="12" fill="#fff" stroke="#222" stroke-width="1"/><path d="M10 11 L20 1" stroke="#1a1aff" stroke-width="1.1"/></svg><div style="position:absolute;left:1396.5px;top:528.03px;font-size:12.43px;line-height:18.65px;color:#111;white-space:nowrap;transform:scaleX(0.901);transform-origin:0 0;">Freq...</div><div style="position:absolute;left:1442px;top:528.03px;font-size:12.43px;line-height:18.65px;color:#111;white-space:nowrap;transform:scaleX(0.917);transform-origin:0 0;">Frequency...</div><svg style="left:1363px;top:547.48px" width="31" height="13" viewBox="0 0 31 13"><path d="M0 6 H9 M21 6 H30" stroke="#111" stroke-width="1.3"/><rect x="9" y="0" width="12" height="12" fill="#fff" stroke="#222" stroke-width="1"/><path d="M12 5 H18" stroke="#888" stroke-width="0.8" stroke-dasharray="1 1"/></svg><div style="position:absolute;left:1396.5px;top:545.75px;font-size:12.43px;line-height:18.65px;color:#111;white-space:nowrap;transform:scaleX(0.901);transform-origin:0 0;">Freq...</div><div style="position:absolute;left:1442px;top:545.75px;font-size:12.43px;line-height:18.65px;color:#111;white-space:nowrap;transform:scaleX(0.917);transform-origin:0 0;">Frequency...</div><svg style="left:1363px;top:565.1999999999999px" width="31" height="13" viewBox="0 0 31 13"><path d="M0 6 H8 M21 6 H30" stroke="#111" stroke-width="1.3"/><rect x="8" y="0" width="13" height="12" fill="#e8f4e8" stroke="#222" stroke-width="1"/><path d="M10 3.5 q2 -2 4.5 0 t4.5 0" fill="none" stroke="#20a040" stroke-width="1"/><path d="M10 6.5 q2 -2 4.5 0 t4.5 0" fill="none" stroke="#c02020" stroke-width="1"/><path d="M10 9.5 q2 -2 4.5 0 t4.5 0" fill="none" stroke="#20a040" stroke-width="1"/></svg><div style="position:absolute;left:1396.5px;top:563.47px;font-size:12.43px;line-height:18.65px;color:#111;white-space:nowrap;transform:scaleX(0.901);transform-origin:0 0;">HPF...</div><div style="position:absolute;left:1442px;top:563.47px;font-size:12.43px;line-height:18.65px;color:#111;white-space:nowrap;transform:scaleX(0.917);transform-origin:0 0;">Highpass B...</div><svg style="left:1363px;top:582.92px" width="31" height="13" viewBox="0 0 31 13"><path d="M0 6 H8 M21 6 H30" stroke="#111" stroke-width="1.3"/><rect x="8" y="0" width="13" height="12" fill="#e8f4e8" stroke="#222" stroke-width="1"/><path d="M10 3.5 q2 -2 4.5 0 t4.5 0" fill="none" stroke="#20a040" stroke-width="1"/><path d="M10 6.5 q2 -2 4.5 0 t4.5 0" fill="none" stroke="#c02020" stroke-width="1"/><path d="M10 9.5 q2 -2 4.5 0 t4.5 0" fill="none" stroke="#20a040" stroke-width="1"/></svg><div style="position:absolute;left:1396.5px;top:581.19px;font-size:12.43px;line-height:18.65px;color:#111;white-space:nowrap;transform:scaleX(0.901);transform-origin:0 0;">HPF...</div><div style="position:absolute;left:1442px;top:581.19px;font-size:12.43px;line-height:18.65px;color:#111;white-space:nowrap;transform:scaleX(0.917);transform-origin:0 0;">Highpass ...</div><svg style="left:1363px;top:600.64px" width="31" height="13" viewBox="0 0 31 13"><path d="M0 6 H8 M21 6 H30" stroke="#111" stroke-width="1.3"/><rect x="8" y="0" width="13" height="12" fill="#e8f4e8" stroke="#222" stroke-width="1"/><path d="M10 3.5 q2 -2 4.5 0 t4.5 0" fill="none" stroke="#20a040" stroke-width="1"/><path d="M10 6.5 q2 -2 4.5 0 t4.5 0" fill="none" stroke="#c02020" stroke-width="1"/><path d="M10 9.5 q2 -2 4.5 0 t4.5 0" fill="none" stroke="#20a040" stroke-width="1"/></svg><div style="position:absolute;left:1396.5px;top:598.91px;font-size:12.43px;line-height:18.65px;color:#111;white-space:nowrap;transform:scaleX(0.901);transform-origin:0 0;">HPF...</div><div style="position:absolute;left:1442px;top:598.91px;font-size:12.43px;line-height:18.65px;color:#111;white-space:nowrap;transform:scaleX(0.917);transform-origin:0 0;">Highpass E...</div><svg style="left:1363px;top:618.3599999999999px" width="31" height="13" viewBox="0 0 31 13"><path d="M2 0 L6 3 H24 L28 0 M2 12 L6 9 H24 L28 12" stroke="#111" stroke-width="1.1" fill="none"/><rect x="9" y="2" width="12" height="8" fill="#d8ecff" stroke="#111" stroke-width="0.9"/><path d="M9 2 L21 10 M21 2 L9 10" stroke="#111" stroke-width="0.9"/></svg><div style="position:absolute;left:1396.5px;top:616.63px;font-size:12.43px;line-height:18.65px;color:#111;white-space:nowrap;transform:scaleX(0.901);transform-origin:0 0;">Hybr...</div><div style="position:absolute;left:1442px;top:616.63px;font-size:12.43px;line-height:18.65px;color:#111;white-space:nowrap;transform:scaleX(0.917);transform-origin:0 0;">180 Degre...</div><svg style="left:1363px;top:636.0799999999999px" width="31" height="13" viewBox="0 0 31 13"><path d="M2 0 L6 3 H24 L28 0 M2 12 L6 9 H24 L28 12" stroke="#111" stroke-width="1.1" fill="none"/><rect x="9" y="2" width="12" height="8" fill="#d8ecff" stroke="#111" stroke-width="0.9"/><path d="M9 2 L21 10 M21 2 L9 10" stroke="#111" stroke-width="0.9"/></svg><div style="position:absolute;left:1396.5px;top:634.35px;font-size:12.43px;line-height:18.65px;color:#111;white-space:nowrap;transform:scaleX(0.901);transform-origin:0 0;">Hybr...</div><div style="position:absolute;left:1442px;top:634.35px;font-size:12.43px;line-height:18.65px;color:#111;white-space:nowrap;transform:scaleX(0.917);transform-origin:0 0;">90 Degree...</div><svg style="left:1363px;top:653.8px" width="31" height="13" viewBox="0 0 31 13"><path d="M8 0 L15 6 L8 12 M15 6 H26" stroke="#111" stroke-width="1.6" fill="none"/></svg><div style="position:absolute;left:1396.5px;top:652.07px;font-size:12.43px;line-height:18.65px;color:#111;white-space:nowrap;transform:scaleX(0.901);transform-origin:0 0;">Inpu...</div><div style="position:absolute;left:1442px;top:652.07px;font-size:12.43px;line-height:18.65px;color:#111;white-space:nowrap;transform:scaleX(0.917);transform-origin:0 0;">Input Stan...</div><svg style="left:1363px;top:671.52px" width="31" height="13" viewBox="0 0 31 13"><path d="M5 4 H25 M15 4 V12" stroke="#111" stroke-width="1.3"/><circle cx="15" cy="4" r="3.5" fill="#d8ecff" stroke="#111" stroke-width="1.3"/><circle cx="15" cy="11.5" r="1" fill="#111"/></svg><div style="position:absolute;left:1396.5px;top:669.79px;font-size:12.43px;line-height:18.65px;color:#111;white-space:nowrap;transform:scaleX(0.901);transform-origin:0 0;">Isola...</div><div style="position:absolute;left:1442px;top:669.79px;font-size:12.43px;line-height:18.65px;color:#111;white-space:nowrap;transform:scaleX(0.917);transform-origin:0 0;">Isolator</div><svg style="left:1363px;top:689.24px" width="31" height="13" viewBox="0 0 31 13"><path d="M0 6 H8 M21 6 H30" stroke="#111" stroke-width="1.3"/><rect x="8" y="0" width="13" height="12" fill="#e8f4e8" stroke="#222" stroke-width="1"/><path d="M10 3.5 q2 -2 4.5 0 t4.5 0" fill="none" stroke="#20a040" stroke-width="1"/><path d="M10 6.5 q2 -2 4.5 0 t4.5 0" fill="none" stroke="#c02020" stroke-width="1"/><path d="M10 9.5 q2 -2 4.5 0 t4.5 0" fill="none" stroke="#20a040" stroke-width="1"/></svg><div style="position:absolute;left:1396.5px;top:687.51px;font-size:12.43px;line-height:18.65px;color:#111;white-space:nowrap;transform:scaleX(0.901);transform-origin:0 0;">LPF_...</div><div style="position:absolute;left:1442px;top:687.51px;font-size:12.43px;line-height:18.65px;color:#111;white-space:nowrap;transform:scaleX(0.917);transform-origin:0 0;">Lowpass B...</div><svg style="left:1363px;top:706.9599999999999px" width="31" height="13" viewBox="0 0 31 13"><path d="M0 6 H8 M21 6 H30" stroke="#111" stroke-width="1.3"/><rect x="8" y="0" width="13" height="12" fill="#e8f4e8" stroke="#222" stroke-width="1"/><path d="M10 3.5 q2 -2 4.5 0 t4.5 0" fill="none" stroke="#20a040" stroke-width="1"/><path d="M10 6.5 q2 -2 4.5 0 t4.5 0" fill="none" stroke="#c02020" stroke-width="1"/><path d="M10 9.5 q2 -2 4.5 0 t4.5 0" fill="none" stroke="#20a040" stroke-width="1"/></svg><div style="position:absolute;left:1396.5px;top:705.23px;font-size:12.43px;line-height:18.65px;color:#111;white-space:nowrap;transform:scaleX(0.901);transform-origin:0 0;">LPF_...</div><div style="position:absolute;left:1442px;top:705.23px;font-size:12.43px;line-height:18.65px;color:#111;white-space:nowrap;transform:scaleX(0.917);transform-origin:0 0;">Lowpass C...</div><div style="position:absolute;left:1355px;top:721.5px;width:241px;height:4px;background:#f0f0f0;border-top:1px solid #828282;"></div><div style="position:absolute;left:1355px;top:726px;width:241px;height:103px;background:#f0f0f0;border:1px solid #a8a8a8;"></div><div style="position:absolute;left:1360.5px;top:727.37px;font-size:12.43px;line-height:18.65px;color:#111;white-space:nowrap;transform:scaleX(0.897);transform-origin:0 0;">Library: RF System</div><div style="position:absolute;left:1360.5px;top:741.17px;font-size:12.43px;line-height:18.65px;color:#111;white-space:nowrap;transform:scaleX(0.897);transform-origin:0 0;">RF System Components, supports</div><div style="position:absolute;left:1360.5px;top:754.57px;font-size:12.43px;line-height:18.65px;color:#111;white-space:nowrap;transform:scaleX(0.897);transform-origin:0 0;">classical and extracted behavioral models</div><svg style="left:1578px;top:733px" width="13" height="10" viewBox="0 0 13 10"><path d="M2.5 7 L6.5 3 L10.5 7" fill="none" stroke="#c0c0c0" stroke-width="1.3"/></svg><svg style="left:1578px;top:813px" width="13" height="10" viewBox="0 0 13 10"><path d="M2.5 3 L6.5 7 L10.5 3" fill="none" stroke="#c0c0c0" stroke-width="1.3"/></svg><div style="position:absolute;left:1352px;top:833px;width:248px;height:27px;background:#f0f0f0;"></div><div style="position:absolute;left:1354px;top:835px;width:80px;height:23px;background:#fff;border:1px solid #c8c8c8;border-top:none;border-radius:0 0 2px 2px;"></div><div style="position:absolute;left:1359.5px;top:839.57px;font-size:12.43px;line-height:18.65px;color:#111;white-space:nowrap;transform:scaleX(0.901);transform-origin:0 0;">Part Selecto...</div><div style="position:absolute;left:1440px;top:839.57px;font-size:12.43px;line-height:18.65px;color:#6a6a6a;white-space:nowrap;transform:scaleX(0.901);transform-origin:0 0;">Workspace ...</div><div style="position:absolute;left:1520px;top:839.57px;font-size:12.43px;line-height:18.65px;color:#6a6a6a;white-space:nowrap;transform:scaleX(0.901);transform-origin:0 0;">Design Vari...</div>
<div style="position:absolute;left:0px;top:859.5px;width:1600px;height:17.5px;background:#f0f0f0;"></div>
<div style="position:absolute;left:0px;top:858px;width:211px;height:1.5px;background:#e8e8e8;"></div>
<div style="position:absolute;left:1347px;top:858px;width:253px;height:1.5px;background:#e8e8e8;"></div>
<div style="position:absolute;left:4.5px;top:862.37px;font-size:12.43px;line-height:18.65px;color:#000;white-space:nowrap;transform:scaleX(0.917);transform-origin:0 0;">Ready</div>
<div style="position:absolute;left:1260px;top:861px;width:1px;height:16px;background:#d4d4d4;"></div>
<div style="position:absolute;left:1507px;top:861px;width:1px;height:16px;background:#d4d4d4;"></div>
<div style="position:absolute;left:1534px;top:861px;width:1px;height:16px;background:#d4d4d4;"></div>
<div style="position:absolute;left:1567px;top:861px;width:1px;height:16px;background:#d4d4d4;"></div>
<div style="position:absolute;left:1512px;top:862.67px;font-size:12.43px;line-height:18.65px;color:#222;white-space:nowrap;transform:scaleX(0.861);transform-origin:0 0;">CAP</div>
<div style="position:absolute;left:1539px;top:862.67px;font-size:12.43px;line-height:18.65px;color:#777;white-space:nowrap;transform:scaleX(0.861);transform-origin:0 0;">NUM</div>
<div style="position:absolute;left:1572px;top:862.67px;font-size:12.43px;line-height:18.65px;color:#777;white-space:nowrap;transform:scaleX(0.861);transform-origin:0 0;">SCRL</div>
</body></html>
